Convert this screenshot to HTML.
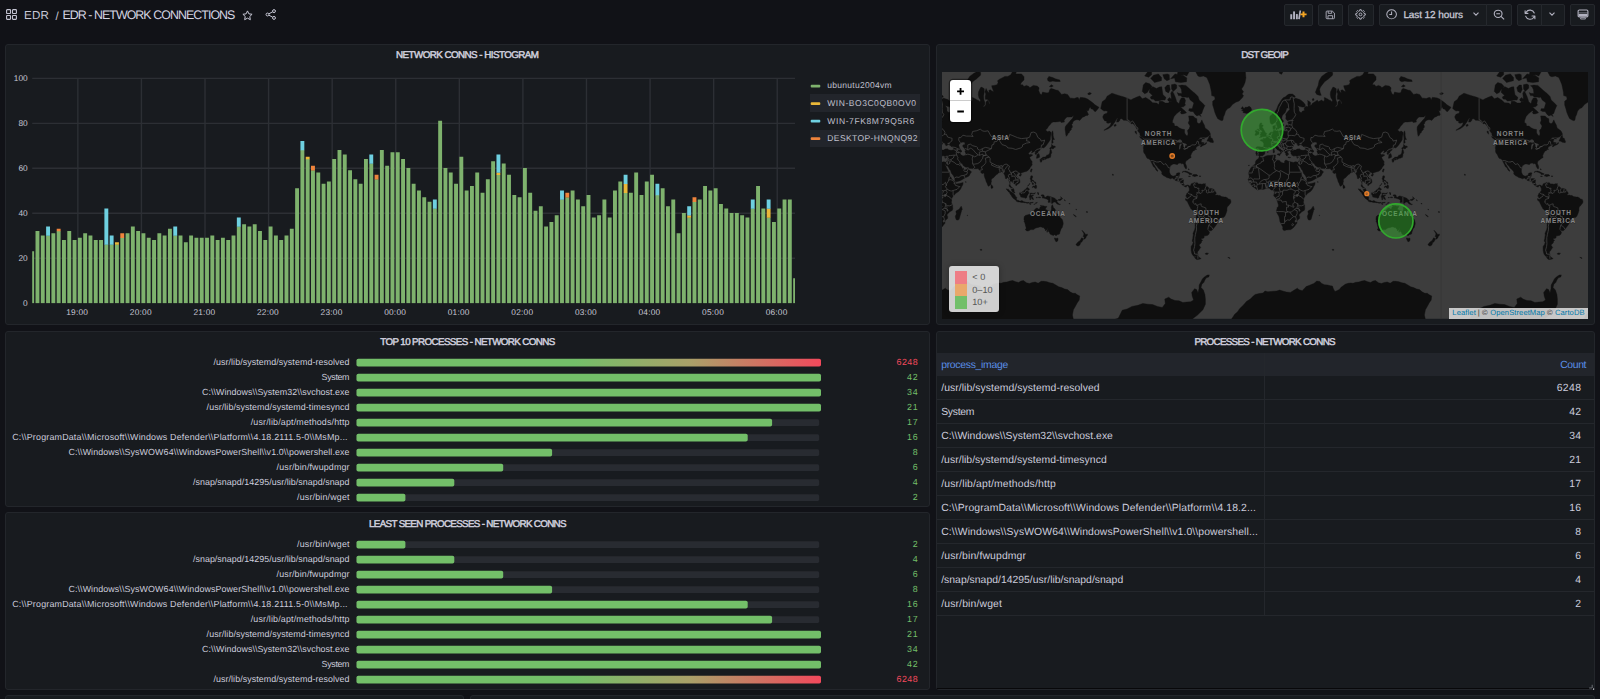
<!DOCTYPE html>
<html><head><meta charset="utf-8"><title>EDR - NETWORK CONNECTIONS - Grafana</title>
<style>
html,body{margin:0;padding:0;}
body{width:1600px;height:699px;overflow:hidden;background:#111217;position:relative;font-family:"Liberation Sans",sans-serif;}
.t{position:absolute;white-space:nowrap;line-height:20px;height:20px;text-rendering:geometricPrecision;}
.p{position:absolute;background:#181b1f;border:1px solid #23262b;border-radius:3px;box-sizing:border-box;}
.b{position:absolute;background:#181b1f;border:1px solid #25282d;box-sizing:border-box;top:4px;height:21.5px;border-radius:2px;}
svg{position:absolute;overflow:visible;}
.abs{position:absolute;}
</style></head><body>
<div class="p" style="left:5px;top:44px;width:925px;height:281px"></div>
<div class="p" style="left:936px;top:44px;width:659px;height:281px"></div>
<div class="p" style="left:5px;top:331px;width:925px;height:176px"></div>
<div class="p" style="left:5px;top:512px;width:925px;height:178px"></div>
<div class="p" style="left:936px;top:331px;width:659px;height:359px"></div>
<div class="p" style="left:5px;top:695px;width:459px;height:65px"></div>
<div class="p" style="left:470px;top:695px;width:1125px;height:65px"></div>
<svg style="left:6px;top:9px" width="11" height="11" viewBox="0 0 11 11" fill="none" stroke="#c4c4d2" stroke-width="1.1">
<rect x="0.6" y="0.6" width="3.9" height="3.9" rx="0.6"/><rect x="6.5" y="0.6" width="3.9" height="3.9" rx="0.6"/>
<rect x="0.6" y="6.5" width="3.9" height="3.9" rx="0.6"/><rect x="6.5" y="6.5" width="3.9" height="3.9" rx="0.6"/></svg>
<svg style="left:241.5px;top:9.8px" width="11" height="10.5" viewBox="0 0 22 21" fill="none" stroke="#c7c7d5" stroke-width="2" stroke-linejoin="round">
<path d="M11 1.8l2.8 5.9 6.4.8-4.7 4.5 1.2 6.4L11 16.3 5.3 19.4l1.2-6.4L1.8 8.5l6.4-.8z"/></svg>
<svg style="left:264.6px;top:9.3px" width="11.5" height="11" viewBox="0 0 23 22" fill="none" stroke="#c7c7d5" stroke-width="2">
<circle cx="18" cy="4.2" r="2.9"/><circle cx="5" cy="11" r="2.9"/><circle cx="18" cy="17.8" r="2.9"/><path d="M7.6 9.7l7.8-4.1M7.6 12.3l7.8 4.1"/></svg>
<div class="b" style="left:1284px;width:29px;"></div>
<div class="b" style="left:1318px;width:25px;"></div>
<div class="b" style="left:1348px;width:26px;"></div>
<div class="b" style="left:1379px;width:108px;border-radius:2px 0 0 2px"></div>
<div class="b" style="left:1486px;width:26px;border-radius:0 2px 2px 0"></div>
<div class="b" style="left:1517px;width:25px;border-radius:2px 0 0 2px"></div>
<div class="b" style="left:1541px;width:24px;border-radius:0 2px 2px 0"></div>
<div class="b" style="left:1570px;width:25px;"></div>
<svg style="left:1289.5px;top:8.6px" width="18" height="11.2" viewBox="0 0 18 12" preserveAspectRatio="none">
<rect x="0.3" y="5.6" width="1.9" height="5.4" fill="#b2b2c0"/><rect x="3.1" y="2.6" width="1.9" height="8.4" fill="#b2b2c0"/><rect x="5.9" y="5.4" width="1.9" height="5.6" fill="#b2b2c0"/>
<path d="M9.0 10.8L10.3 1.6" stroke="#b2b2c0" stroke-width="1.7"/>
<path d="M13.5 2.6v6.2M10.4 5.7h6.2" stroke="#f5a623" stroke-width="2"/></svg>
<svg style="left:1325.4px;top:9.7px" width="10.6" height="9.8" viewBox="0 0 23 23" preserveAspectRatio="none" fill="none" stroke="#b2b2c0" stroke-width="2" stroke-linejoin="round">
<path d="M2.5 4.5a2 2 0 0 1 2-2h11.2l4.8 4.8v11.2a2 2 0 0 1-2 2h-14a2 2 0 0 1-2-2z"/><path d="M7 2.8v5h7.5v-5M6.5 20.3v-7h10v7"/></svg>
<svg style="left:1355.3px;top:9.0px" width="11" height="10.8" viewBox="0 0 24 24" preserveAspectRatio="none" fill="none" stroke="#b2b2c0" stroke-width="2.1" stroke-linejoin="round">
<circle cx="12" cy="12" r="3.1"/><path d="M10.07 4.24L10.42 1.52L13.58 1.52L13.93 4.24L16.13 5.15L18.30 3.47L20.53 5.70L18.85 7.87L19.76 10.07L22.48 10.42L22.48 13.58L19.76 13.93L18.85 16.13L20.53 18.30L18.30 20.53L16.13 18.85L13.93 19.76L13.58 22.48L10.42 22.48L10.07 19.76L7.87 18.85L5.70 20.53L3.47 18.30L5.15 16.13L4.24 13.93L1.52 13.58L1.52 10.42L4.24 10.07L5.15 7.87L3.47 5.70L5.70 3.47L7.87 5.15Z"/></svg>
<svg style="left:1385.7px;top:9.1px" width="11.2" height="10.6" viewBox="0 0 22 22" preserveAspectRatio="none" fill="none" stroke="#b2b2c0" stroke-width="2">
<circle cx="11" cy="11" r="9.5"/><path d="M11 5v6.3H6.5"/></svg>
<svg style="left:1472.8px;top:12.3px" width="6" height="4" viewBox="0 0 12 8" fill="none" stroke="#b2b2c0" stroke-width="2.2"><path d="M1 1.2l5 5 5-5"/></svg>
<svg style="left:1549.3px;top:12.3px" width="6" height="4" viewBox="0 0 12 8" fill="none" stroke="#b2b2c0" stroke-width="2.2"><path d="M1 1.2l5 5 5-5"/></svg>
<svg style="left:1493px;top:9.0px" width="12" height="11.2" viewBox="0 0 24 24" preserveAspectRatio="none" fill="none" stroke="#b2b2c0" stroke-width="2.2">
<circle cx="10.3" cy="10.3" r="7.8"/><path d="M16 16l6.3 6.3M6.6 10.3h7.4"/></svg>
<svg style="left:1523.6px;top:8.9px" width="12" height="11.4" viewBox="0 0 24 24" preserveAspectRatio="none" fill="none" stroke="#b2b2c0" stroke-width="2.2" stroke-linecap="round" stroke-linejoin="round">
<path d="M20.5 8.5A9 9 0 0 0 4.2 6.8L2.5 9M2.2 3.5v5.7h5.7M3.5 15.5a9 9 0 0 0 16.3 1.7l1.7-2.2M21.8 20.5v-5.7h-5.7"/></svg>
<svg style="left:1576.6px;top:8.6px" width="12" height="11.4" viewBox="0 0 24 24" fill="none" preserveAspectRatio="none" stroke="#b2b2c0" stroke-width="2.2" stroke-linejoin="round">
<rect x="2.2" y="2.2" width="19.6" height="14.6" rx="2.4"/><path d="M2.8 8.2h18.4" stroke-width="1.2"/><rect x="3" y="10.4" width="18" height="5.6" fill="#b2b2c0" stroke="none"/><path d="M7.3 18.6h9.4v2.6H7.3z" stroke-width="1.6"/></svg>
<svg style="left:0;top:0" width="1600" height="699" viewBox="0 0 1600 699">
<defs><clipPath id="pc"><rect x="32.2" y="60" width="762.8" height="243.5"/></clipPath></defs>
<path d="M32.2 258.24H795.0 M32.2 213.28H795.0 M32.2 168.32H795.0 M32.2 123.36H795.0 M32.2 78.40H795.0 M77.85 78.4V303.2 M141.43 78.4V303.2 M205.01 78.4V303.2 M268.59 78.4V303.2 M332.17 78.4V303.2 M395.75 78.4V303.2 M459.33 78.4V303.2 M522.91 78.4V303.2 M586.49 78.4V303.2 M650.07 78.4V303.2 M713.65 78.4V303.2 M777.23 78.4V303.2" stroke="#2c2f34" stroke-width="1.4" fill="none"/>
<g clip-path="url(#pc)">
<path d="M30.22 303.20V251.20h3.9V303.20zM35.51 303.20V230.96h3.9V303.20zM40.81 303.20V235.46h3.9V303.20zM46.11 303.20V235.46h3.9V303.20zM51.41 303.20V233.21h3.9V303.20zM56.71 303.20V230.96h3.9V303.20zM62.01 303.20V239.96h3.9V303.20zM67.30 303.20V230.96h3.9V303.20zM72.60 303.20V239.96h3.9V303.20zM77.90 303.20V237.71h3.9V303.20zM83.20 303.20V233.21h3.9V303.20zM88.50 303.20V235.46h3.9V303.20zM93.80 303.20V239.96h3.9V303.20zM99.09 303.20V239.96h3.9V303.20zM104.39 303.20V244.45h3.9V303.20zM109.69 303.20V244.45h3.9V303.20zM114.99 303.20V244.45h3.9V303.20zM120.29 303.20V237.71h3.9V303.20zM125.59 303.20V233.21h3.9V303.20zM130.88 303.20V226.47h3.9V303.20zM136.18 303.20V230.96h3.9V303.20zM141.48 303.20V233.21h3.9V303.20zM146.78 303.20V237.71h3.9V303.20zM152.08 303.20V239.96h3.9V303.20zM157.38 303.20V233.21h3.9V303.20zM162.67 303.20V235.46h3.9V303.20zM167.97 303.20V228.72h3.9V303.20zM173.27 303.20V235.46h3.9V303.20zM178.57 303.20V235.46h3.9V303.20zM183.87 303.20V242.20h3.9V303.20zM189.16 303.20V235.46h3.9V303.20zM194.46 303.20V237.71h3.9V303.20zM199.76 303.20V237.71h3.9V303.20zM205.06 303.20V237.71h3.9V303.20zM210.36 303.20V235.46h3.9V303.20zM215.66 303.20V239.96h3.9V303.20zM220.95 303.20V237.71h3.9V303.20zM226.25 303.20V239.96h3.9V303.20zM231.55 303.20V235.46h3.9V303.20zM236.85 303.20V226.47h3.9V303.20zM242.15 303.20V224.22h3.9V303.20zM247.45 303.20V226.47h3.9V303.20zM252.75 303.20V224.22h3.9V303.20zM258.04 303.20V230.96h3.9V303.20zM263.34 303.20V239.96h3.9V303.20zM268.64 303.20V226.47h3.9V303.20zM273.94 303.20V235.46h3.9V303.20zM279.24 303.20V239.96h3.9V303.20zM284.53 303.20V235.46h3.9V303.20zM289.83 303.20V228.72h3.9V303.20zM295.13 303.20V188.25h3.9V303.20zM300.43 303.20V150.04h3.9V303.20zM305.73 303.20V159.03h3.9V303.20zM311.03 303.20V170.27h3.9V303.20zM316.32 303.20V172.52h3.9V303.20zM321.62 303.20V183.76h3.9V303.20zM326.92 303.20V181.51h3.9V303.20zM332.22 303.20V159.03h3.9V303.20zM337.52 303.20V150.04h3.9V303.20zM342.82 303.20V154.53h3.9V303.20zM348.12 303.20V170.27h3.9V303.20zM353.41 303.20V179.26h3.9V303.20zM358.71 303.20V183.76h3.9V303.20zM364.01 303.20V159.03h3.9V303.20zM369.31 303.20V163.52h3.9V303.20zM374.61 303.20V179.26h3.9V303.20zM379.90 303.20V150.04h3.9V303.20zM385.20 303.20V165.77h3.9V303.20zM390.50 303.20V152.28h3.9V303.20zM395.80 303.20V152.28h3.9V303.20zM401.10 303.20V159.03h3.9V303.20zM406.40 303.20V168.02h3.9V303.20zM411.69 303.20V183.76h3.9V303.20zM416.99 303.20V190.50h3.9V303.20zM422.29 303.20V197.24h3.9V303.20zM427.59 303.20V201.74h3.9V303.20zM432.89 303.20V208.48h3.9V303.20zM438.19 303.20V120.81h3.9V303.20zM443.49 303.20V168.02h3.9V303.20zM448.78 303.20V172.52h3.9V303.20zM454.08 303.20V183.76h3.9V303.20zM459.38 303.20V156.78h3.9V303.20zM464.68 303.20V190.50h3.9V303.20zM469.98 303.20V186.00h3.9V303.20zM475.27 303.20V172.52h3.9V303.20zM480.57 303.20V192.75h3.9V303.20zM485.87 303.20V179.26h3.9V303.20zM491.17 303.20V161.28h3.9V303.20zM496.47 303.20V174.76h3.9V303.20zM501.77 303.20V163.52h3.9V303.20zM507.06 303.20V174.76h3.9V303.20zM512.36 303.20V195.00h3.9V303.20zM517.66 303.20V197.24h3.9V303.20zM522.96 303.20V168.02h3.9V303.20zM528.26 303.20V192.75h3.9V303.20zM533.56 303.20V210.73h3.9V303.20zM538.86 303.20V206.24h3.9V303.20zM544.15 303.20V226.47h3.9V303.20zM549.45 303.20V221.97h3.9V303.20zM554.75 303.20V215.23h3.9V303.20zM560.05 303.20V199.49h3.9V303.20zM565.35 303.20V197.24h3.9V303.20zM570.64 303.20V190.50h3.9V303.20zM575.94 303.20V199.49h3.9V303.20zM581.24 303.20V206.24h3.9V303.20zM586.54 303.20V195.00h3.9V303.20zM591.84 303.20V217.48h3.9V303.20zM597.14 303.20V215.23h3.9V303.20zM602.43 303.20V199.49h3.9V303.20zM607.73 303.20V217.48h3.9V303.20zM613.03 303.20V190.50h3.9V303.20zM618.33 303.20V181.51h3.9V303.20zM623.63 303.20V192.75h3.9V303.20zM628.93 303.20V192.75h3.9V303.20zM634.22 303.20V172.52h3.9V303.20zM639.52 303.20V195.00h3.9V303.20zM644.82 303.20V181.51h3.9V303.20zM650.12 303.20V174.76h3.9V303.20zM655.42 303.20V195.00h3.9V303.20zM660.72 303.20V188.25h3.9V303.20zM666.01 303.20V206.24h3.9V303.20zM671.31 303.20V199.49h3.9V303.20zM676.61 303.20V233.21h3.9V303.20zM681.91 303.20V212.98h3.9V303.20zM687.21 303.20V217.48h3.9V303.20zM692.51 303.20V201.74h3.9V303.20zM697.80 303.20V199.49h3.9V303.20zM703.10 303.20V186.00h3.9V303.20zM708.40 303.20V190.50h3.9V303.20zM713.70 303.20V188.25h3.9V303.20zM719.00 303.20V203.99h3.9V303.20zM724.30 303.20V208.48h3.9V303.20zM729.59 303.20V212.98h3.9V303.20zM734.89 303.20V212.98h3.9V303.20zM740.19 303.20V215.23h3.9V303.20zM745.49 303.20V217.48h3.9V303.20zM750.79 303.20V208.48h3.9V303.20zM756.09 303.20V186.00h3.9V303.20zM761.38 303.20V208.48h3.9V303.20zM766.68 303.20V217.48h3.9V303.20zM771.98 303.20V221.97h3.9V303.20zM777.28 303.20V208.48h3.9V303.20zM782.58 303.20V199.49h3.9V303.20zM787.88 303.20V199.49h3.9V303.20zM793.17 303.20V278.17h3.9V303.20z" fill="#7eb26d" fill-opacity="1"/>
<path d="M114.99 244.75V242.20h3.9V244.75zM305.73 159.33V156.78h3.9V159.33zM496.47 175.06V172.52h3.9V175.06zM623.63 193.05V183.76h3.9V193.05zM687.21 217.78V215.23h3.9V217.78zM766.68 217.78V208.48h3.9V217.78z" fill="#eab839" fill-opacity="1"/>
<path d="M46.11 235.76V226.47h3.9V235.76zM104.39 244.75V208.48h3.9V244.75zM109.69 244.75V235.46h3.9V244.75zM173.27 235.76V226.47h3.9V235.76zM236.85 226.77V217.48h3.9V226.77zM300.43 150.34V141.04h3.9V150.34zM369.31 163.82V154.53h3.9V163.82zM432.89 208.78V199.49h3.9V208.78zM496.47 172.82V154.53h3.9V172.82zM560.05 199.79V190.50h3.9V199.79zM623.63 184.06V174.76h3.9V184.06zM655.42 195.30V183.76h3.9V195.30zM687.21 215.53V206.24h3.9V215.53zM750.79 208.78V199.49h3.9V208.78zM766.68 208.78V199.49h3.9V208.78z" fill="#6ed0e0" fill-opacity="1"/>
<path d="M56.71 231.26V228.72h3.9V231.26zM120.29 238.01V233.21h3.9V238.01zM311.03 170.57V165.77h3.9V170.57zM374.61 179.56V174.76h3.9V179.56zM565.35 197.54V192.75h3.9V197.54zM692.51 202.04V197.24h3.9V202.04z" fill="#ef843c" fill-opacity="1"/>
</g></svg>
<svg style="left:0;top:0" width="1600" height="699"><rect x="810.7" y="84.70" width="9.6" height="2.7" rx="1" fill="#7eb26d"/></svg>
<div class="abs" style="left:810px;top:94.3px;width:110.3px;height:17.5px;background:#22252b"></div>
<svg style="left:0;top:0" width="1600" height="699"><rect x="810.7" y="102.25" width="9.6" height="2.7" rx="1" fill="#eab839"/></svg>
<svg style="left:0;top:0" width="1600" height="699"><rect x="810.7" y="119.80" width="9.6" height="2.7" rx="1" fill="#6ed0e0"/></svg>
<div class="abs" style="left:810px;top:129.5px;width:110.3px;height:17.5px;background:#22252b"></div>
<svg style="left:0;top:0" width="1600" height="699"><rect x="810.7" y="137.35" width="9.6" height="2.7" rx="1" fill="#ef843c"/></svg>
<svg style="left:0;top:0" width="1600" height="699" viewBox="0 0 1600 699"><defs><linearGradient id="gg" x1="0" x2="1" y1="0" y2="0"><stop offset="0" stop-color="#73bf69"/><stop offset="0.47" stop-color="#73bf69"/><stop offset="0.72" stop-color="#aaa069"/><stop offset="1" stop-color="#f2495c"/></linearGradient></defs><rect x="356.5" y="359.30" width="462.7" height="6.6" rx="1.6" fill="#282b31"/><rect x="356.5" y="358.70" width="464.5" height="7.8" rx="1.8" fill="url(#gg)"/><rect x="356.5" y="374.30" width="462.7" height="6.6" rx="1.6" fill="#282b31"/><rect x="356.5" y="373.70" width="464.5" height="7.8" rx="1.8" fill="#73bf69"/><rect x="356.5" y="389.30" width="462.7" height="6.6" rx="1.6" fill="#282b31"/><rect x="356.5" y="388.70" width="464.5" height="7.8" rx="1.8" fill="#73bf69"/><rect x="356.5" y="404.30" width="462.7" height="6.6" rx="1.6" fill="#282b31"/><rect x="356.5" y="403.70" width="464.5" height="7.8" rx="1.8" fill="#73bf69"/><rect x="356.5" y="419.30" width="462.7" height="6.6" rx="1.6" fill="#282b31"/><rect x="356.5" y="418.70" width="415.6" height="7.8" rx="1.8" fill="#73bf69"/><rect x="356.5" y="434.30" width="462.7" height="6.6" rx="1.6" fill="#282b31"/><rect x="356.5" y="433.70" width="391.2" height="7.8" rx="1.8" fill="#73bf69"/><rect x="356.5" y="449.30" width="462.7" height="6.6" rx="1.6" fill="#282b31"/><rect x="356.5" y="448.70" width="195.6" height="7.8" rx="1.8" fill="#73bf69"/><rect x="356.5" y="464.30" width="462.7" height="6.6" rx="1.6" fill="#282b31"/><rect x="356.5" y="463.70" width="146.7" height="7.8" rx="1.8" fill="#73bf69"/><rect x="356.5" y="479.30" width="462.7" height="6.6" rx="1.6" fill="#282b31"/><rect x="356.5" y="478.70" width="97.8" height="7.8" rx="1.8" fill="#73bf69"/><rect x="356.5" y="494.30" width="462.7" height="6.6" rx="1.6" fill="#282b31"/><rect x="356.5" y="493.70" width="48.9" height="7.8" rx="1.8" fill="#73bf69"/><rect x="356.5" y="541.30" width="462.7" height="6.6" rx="1.6" fill="#282b31"/><rect x="356.5" y="540.70" width="48.9" height="7.8" rx="1.8" fill="#73bf69"/><rect x="356.5" y="556.30" width="462.7" height="6.6" rx="1.6" fill="#282b31"/><rect x="356.5" y="555.70" width="97.8" height="7.8" rx="1.8" fill="#73bf69"/><rect x="356.5" y="571.30" width="462.7" height="6.6" rx="1.6" fill="#282b31"/><rect x="356.5" y="570.70" width="146.7" height="7.8" rx="1.8" fill="#73bf69"/><rect x="356.5" y="586.30" width="462.7" height="6.6" rx="1.6" fill="#282b31"/><rect x="356.5" y="585.70" width="195.6" height="7.8" rx="1.8" fill="#73bf69"/><rect x="356.5" y="601.30" width="462.7" height="6.6" rx="1.6" fill="#282b31"/><rect x="356.5" y="600.70" width="391.2" height="7.8" rx="1.8" fill="#73bf69"/><rect x="356.5" y="616.30" width="462.7" height="6.6" rx="1.6" fill="#282b31"/><rect x="356.5" y="615.70" width="415.6" height="7.8" rx="1.8" fill="#73bf69"/><rect x="356.5" y="631.30" width="462.7" height="6.6" rx="1.6" fill="#282b31"/><rect x="356.5" y="630.70" width="464.5" height="7.8" rx="1.8" fill="#73bf69"/><rect x="356.5" y="646.30" width="462.7" height="6.6" rx="1.6" fill="#282b31"/><rect x="356.5" y="645.70" width="464.5" height="7.8" rx="1.8" fill="#73bf69"/><rect x="356.5" y="661.30" width="462.7" height="6.6" rx="1.6" fill="#282b31"/><rect x="356.5" y="660.70" width="464.5" height="7.8" rx="1.8" fill="#73bf69"/><rect x="356.5" y="676.30" width="462.7" height="6.6" rx="1.6" fill="#282b31"/><rect x="356.5" y="675.70" width="464.5" height="7.8" rx="1.8" fill="url(#gg)"/></svg>
<div class="abs" style="left:937px;top:353px;width:656.5px;height:23.2px;background:#22252b"></div>
<div class="abs" style="left:1264.3px;top:353px;width:1px;height:262.5px;background:#24272c"></div>
<div class="abs" style="left:937px;top:398.7px;width:656.5px;height:1px;background:#24272c"></div>
<div class="abs" style="left:937px;top:422.8px;width:656.5px;height:1px;background:#24272c"></div>
<div class="abs" style="left:937px;top:446.8px;width:656.5px;height:1px;background:#24272c"></div>
<div class="abs" style="left:937px;top:470.9px;width:656.5px;height:1px;background:#24272c"></div>
<div class="abs" style="left:937px;top:494.9px;width:656.5px;height:1px;background:#24272c"></div>
<div class="abs" style="left:937px;top:519.0px;width:656.5px;height:1px;background:#24272c"></div>
<div class="abs" style="left:937px;top:543.1px;width:656.5px;height:1px;background:#24272c"></div>
<div class="abs" style="left:937px;top:567.1px;width:656.5px;height:1px;background:#24272c"></div>
<div class="abs" style="left:937px;top:591.2px;width:656.5px;height:1px;background:#24272c"></div>
<div class="abs" style="left:937px;top:615.2px;width:656.5px;height:1px;background:#24272c"></div>
<div class="abs" style="left:937px;top:687.6px;width:656px;height:1.2px;background:#08080a"></div>
<svg style="left:1588px;top:683.5px" width="7" height="7" viewBox="0 0 7 7"><path d="M4.2 0.8v3.2H1.2" stroke="#6a6d75" stroke-width="1" fill="none"/><rect x="5" y="4.5" width="1.2" height="1.2" fill="#e0e0e8"/></svg>
<svg style="left:941.6px;top:72.0px;overflow:hidden" width="646.6" height="246.8" viewBox="0 0 646.6 246.8">
<rect x="0" y="0" width="646.6" height="246.8" fill="#3d3d3d"/>
<path d="M-34.8 84.8L-34.2 84.6L-33.2 85.5L-31.9 85.4L-31.0 85.6L-29.5 84.8L-28.0 83.9L-26.1 83.4L-24.1 83.6L-22.2 83.2L-20.2 83.1L-19.0 82.9L-18.2 83.3L-18.7 84.3L-18.5 85.1L-19.1 86.6L-18.7 87.3L-18.0 87.9L-16.8 88.2L-15.8 88.2L-14.1 88.8L-13.8 89.7L-12.4 90.4L-10.9 91.1L-9.7 91.0L-9.3 90.2L-9.4 89.0L-8.5 88.3L-7.0 88.3L-6.3 89.0L-4.6 89.6L-2.6 90.0L-0.6 90.5L0.6 90.0L1.5 89.8L2.6 90.0L2.9 91.5L2.7 92.1L3.3 93.5L4.0 94.6L4.7 96.3L5.7 98.1L5.9 99.2L7.1 100.2L7.4 101.3L7.5 102.9L7.7 103.8L8.6 104.4L9.3 106.1L9.8 107.3L11.1 108.3L12.4 109.3L13.2 110.0L13.3 111.0L14.3 112.0L15.8 111.7L17.4 111.4L19.2 111.1L21.1 110.6L21.0 112.0L20.5 113.3L19.7 114.6L18.9 116.4L17.9 117.9L16.5 119.6L15.0 120.5L13.5 121.6L12.1 123.2L11.1 124.3L10.4 124.9L9.8 126.5L9.1 128.0L9.5 129.1L9.4 130.4L9.9 131.9L10.6 132.8L10.6 134.6L10.8 136.6L10.4 138.2L9.1 139.1L7.7 139.8L6.7 140.9L5.2 142.2L5.0 143.3L5.6 144.4L5.7 146.2L4.7 147.3L3.3 148.1L3.1 149.7L2.8 151.4L1.8 152.5L0.8 154.0L-0.4 155.4L-1.6 156.5L-3.1 157.5L-4.0 157.7L-5.5 157.8L-7.5 157.9L-9.4 158.6L-10.6 158.2L-11.0 157.6L-11.4 156.3L-11.1 155.1L-12.1 153.4L-12.9 151.6L-14.0 149.7L-14.4 147.6L-14.8 145.4L-15.1 144.4L-16.0 142.8L-17.3 140.4L-17.5 138.7L-17.1 137.1L-16.8 135.6L-15.7 134.4L-15.5 133.1L-16.0 131.4L-16.5 129.7L-17.0 128.3L-17.2 127.2L-18.0 126.1L-19.2 124.9L-20.0 124.1L-20.4 123.1L-19.7 122.3L-19.7 121.3L-19.4 120.1L-19.4 119.1L-19.7 118.5L-20.5 117.8L-21.7 118.0L-22.9 118.1L-23.7 117.2L-24.6 116.2L-26.1 116.0L-27.5 116.2L-28.5 116.6L-29.5 117.1L-31.0 117.6L-32.1 117.3L-33.4 117.2L-34.9 117.5L-36.3 118.0L-37.3 117.5L-38.3 116.7L-39.6 115.8L-40.2 115.5L-41.2 114.9L-41.9 113.8L-42.4 112.9L-43.4 111.9L-43.9 111.3L-44.8 110.5L-45.4 109.9L-45.2 109.0L-45.9 107.8L-45.3 106.7L-44.9 105.4L-44.6 104.1L-45.0 102.9L-45.3 101.6L-45.6 101.1L-44.9 99.7L-44.6 98.4L-43.7 97.3L-43.2 96.0L-42.2 94.9L-41.6 93.9L-40.0 93.0L-39.0 92.3L-38.5 91.2L-38.6 89.9L-38.0 88.7L-37.1 87.6L-35.8 86.9L-35.2 85.7L-34.8 84.8ZM19.2 134.2L19.8 135.6L20.3 137.4L19.6 138.2L19.3 139.7L18.7 141.7L18.1 143.8L17.5 146.0L17.0 147.6L15.5 148.1L14.2 147.7L13.7 146.3L13.3 144.6L13.8 143.1L14.4 142.1L14.1 140.5L13.9 139.5L14.7 138.4L16.2 137.8L17.4 136.9L18.1 135.7L19.2 134.2ZM-37.8 83.3L-37.6 82.1L-38.3 81.2L-37.7 79.6L-37.5 78.0L-37.7 76.7L-38.1 75.6L-36.8 74.7L-34.9 74.8L-32.9 75.1L-30.8 75.1L-30.2 73.3L-30.2 71.5L-31.2 70.1L-31.9 69.2L-33.4 68.8L-33.7 68.1L-31.9 67.5L-30.6 67.8L-30.8 66.1L-30.2 66.6L-28.8 66.4L-27.5 65.4L-27.4 64.3L-26.6 64.0L-25.6 63.4L-24.9 62.3L-24.3 61.0L-23.6 60.5L-22.2 60.1L-21.0 60.0L-20.4 59.3L-20.6 57.6L-21.0 56.3L-21.1 54.1L-19.6 53.8L-18.6 52.9L-18.8 54.9L-18.3 55.4L-19.0 56.3L-19.5 57.3L-19.2 58.3L-18.2 58.8L-18.3 59.3L-17.3 59.0L-16.3 58.7L-15.1 59.5L-14.8 59.0L-13.1 58.5L-11.4 58.0L-10.7 58.7L-9.8 58.7L-9.0 57.8L-8.5 57.1L-8.5 54.5L-7.9 53.2L-6.9 52.9L-6.3 54.1L-5.3 54.0L-5.1 51.8L-6.0 51.2L-6.1 50.1L-4.8 49.5L-3.6 49.3L-1.6 49.5L-0.6 48.7L0.5 48.7L-0.6 47.7L-2.1 47.5L-4.6 48.1L-6.5 48.7L-7.5 47.7L-8.2 46.7L-8.0 44.5L-8.3 42.2L-7.0 40.6L-5.5 38.8L-4.3 37.4L-4.3 36.5L-5.3 36.0L-7.2 36.0L-8.0 38.6L-8.8 40.6L-10.4 41.9L-11.6 43.4L-12.1 45.1L-12.2 47.1L-10.9 48.3L-10.5 49.3L-11.6 50.8L-12.7 51.9L-12.7 53.8L-13.2 55.4L-13.8 55.7L-14.8 55.9L-15.1 56.8L-16.3 57.0L-16.5 55.6L-16.8 54.5L-17.4 53.1L-18.0 50.8L-18.4 49.9L-18.7 49.5L-19.0 50.4L-19.9 51.0L-21.0 52.1L-22.2 52.3L-23.5 51.2L-23.9 49.5L-24.1 47.5L-24.2 45.9L-24.0 44.3L-22.6 43.0L-21.0 41.5L-19.4 41.1L-18.7 39.3L-17.5 37.4L-16.5 35.1L-15.8 33.1L-14.5 31.1L-13.4 29.2L-11.9 27.0L-10.4 25.6L-8.5 24.8L-7.0 23.3L-5.0 22.1L-3.6 22.1L-1.6 22.1L-0.2 23.0L1.3 24.2L0.3 25.9L1.8 26.2L3.3 26.8L5.2 27.3L7.2 28.4L9.6 30.5L11.1 32.6L11.3 34.3L10.1 35.1L8.2 35.1L6.2 34.6L4.7 34.1L3.3 33.6L2.8 32.8L3.8 34.6L4.9 36.0L5.0 39.1L6.2 40.2L7.7 40.4L8.2 39.3L9.6 38.8L10.6 38.8L10.1 36.7L10.6 35.5L12.1 34.3L13.5 34.8L14.2 34.1L13.8 32.3L14.0 29.2L13.3 28.7L15.0 29.2L16.5 30.5L16.5 32.6L15.0 33.1L16.0 33.6L17.6 33.1L18.4 31.3L19.9 30.5L21.8 29.2L23.3 28.1L24.3 29.8L25.8 29.0L27.7 28.1L29.2 29.5L30.6 28.1L30.2 25.6L31.6 25.9L33.6 27.0L35.0 27.9L36.5 28.4L38.0 30.0L38.5 27.9L37.0 25.9L36.3 22.7L36.5 20.0L38.0 16.8L39.0 15.1L40.9 15.8L42.2 16.8L42.2 20.6L41.6 24.2L41.9 27.9L42.9 30.5L42.7 33.1L41.2 34.3L41.9 35.1L43.8 33.1L44.1 29.8L45.8 28.4L46.8 30.0L47.0 31.8L48.0 31.6L47.3 29.5L45.3 27.3L43.4 27.3L43.2 24.5L43.8 22.1L42.9 19.7L44.1 16.5L45.3 19.1L47.3 21.2L46.8 18.4L48.2 17.8L50.0 19.1L51.7 19.7L50.2 15.8L49.7 13.8L52.2 13.4L55.1 12.7L56.1 10.6L55.6 8.7L57.5 7.2L60.0 6.0L62.9 4.4L65.8 4.4L68.8 2.7L70.7 -0.7L73.0 -2.5L74.6 -1.2L73.7 1.9L76.6 1.9L79.5 1.9L82.0 4.8L82.0 7.9L79.0 10.9L78.6 13.1L80.5 12.7L82.0 14.5L84.4 13.4L86.9 14.5L87.8 15.8L91.3 13.4L93.2 13.8L95.2 14.1L97.1 15.8L96.6 18.4L98.1 22.1L99.6 22.7L100.6 20.0L102.5 20.6L105.0 20.9L106.9 20.6L107.7 17.8L108.9 16.5L111.3 17.1L113.8 18.1L116.2 18.4L117.7 20.3L119.6 22.4L122.6 21.8L125.5 22.4L127.4 25.1L127.9 26.2L129.9 26.2L132.3 26.5L134.8 25.6L136.2 25.6L137.2 27.9L138.2 25.4L140.2 25.6L143.1 25.9L145.5 27.0L147.0 28.1L149.4 29.8L151.4 31.3L152.9 32.8L155.3 34.3L157.0 35.3L156.0 36.7L154.5 38.6L153.8 39.5L152.4 39.3L150.9 37.2L149.0 36.7L148.5 35.1L147.3 36.3L146.5 38.4L145.5 38.8L144.6 38.6L145.5 40.6L146.5 42.4L145.5 43.6L144.1 43.4L142.1 44.7L140.6 45.3L139.4 46.5L137.7 48.5L136.2 47.7L134.3 47.7L132.8 48.3L131.8 48.9L130.9 49.9L130.6 51.4L129.6 52.7L130.4 54.1L130.2 55.6L129.2 55.9L129.4 57.6L128.4 58.5L127.4 59.7L127.2 60.8L126.0 61.3L125.5 62.9L124.2 64.3L123.8 62.6L123.5 60.1L123.1 57.6L123.2 55.0L124.3 53.2L125.5 51.9L127.2 50.1L128.9 48.1L130.4 46.5L131.2 44.9L131.4 43.2L129.9 44.9L127.9 44.9L127.0 45.1L125.5 44.9L124.3 45.5L122.6 47.5L121.9 48.9L122.6 49.9L120.6 50.3L119.1 50.4L118.2 49.3L116.2 49.7L113.8 49.9L111.3 49.9L109.8 50.4L108.4 52.3L106.4 54.5L105.4 56.3L103.5 58.0L105.0 59.3L105.7 59.8L107.4 59.0L108.4 60.1L109.2 60.6L108.9 62.6L108.4 64.9L108.2 67.9L106.9 69.8L105.9 71.2L104.5 73.2L103.0 75.0L101.5 75.9L100.1 75.4L99.1 76.2L98.3 76.7L97.8 78.3L96.2 79.6L95.7 80.3L96.4 81.2L97.3 82.7L97.6 84.5L97.3 85.4L96.2 85.8L94.7 86.4L94.5 85.4L94.8 84.3L94.9 83.3L94.2 82.4L93.4 82.3L93.0 81.7L93.5 80.3L92.6 79.7L91.3 80.1L90.1 80.8L89.5 81.1L90.3 79.0L89.3 78.4L88.1 79.7L86.9 80.7L86.2 81.3L87.2 82.2L87.6 83.1L88.8 82.3L89.8 82.7L90.8 83.1L89.8 83.7L88.8 84.4L87.6 85.6L88.1 86.6L88.9 87.9L90.0 89.4L90.2 90.5L89.1 91.0L90.1 91.6L90.1 93.0L89.3 94.0L88.3 95.2L87.8 96.4L86.9 97.5L85.9 98.4L84.7 99.3L83.0 99.7L82.0 100.0L80.5 100.6L79.0 101.0L78.8 101.9L78.4 101.8L78.4 100.9L77.1 100.6L76.1 101.1L75.2 102.0L74.4 103.1L74.6 104.1L75.6 105.4L76.9 106.4L77.6 107.7L77.9 109.5L77.8 110.8L76.6 111.7L75.6 112.1L75.1 112.9L74.0 113.7L73.5 113.0L73.7 112.3L72.7 112.0L71.7 111.3L71.2 110.5L69.8 109.8L69.6 109.1L69.0 109.1L68.8 110.0L68.4 111.2L68.0 112.5L68.1 113.3L68.8 114.0L69.2 115.1L70.2 115.6L71.0 116.2L71.7 116.9L72.1 118.1L72.1 119.4L72.7 120.3L72.9 120.9L72.2 121.0L71.2 120.2L70.1 119.6L69.6 118.6L69.3 117.4L69.1 116.2L68.5 115.6L67.8 114.6L67.1 114.4L67.2 113.0L67.5 111.7L67.5 110.5L67.0 109.0L66.6 107.5L66.4 106.0L65.6 105.5L64.4 106.7L63.4 106.5L63.3 104.9L62.9 103.6L62.4 102.5L61.4 101.6L61.0 100.5L60.5 99.7L59.5 99.6L58.8 100.3L57.5 100.6L56.1 100.9L55.9 101.8L54.6 102.5L53.6 103.5L52.4 104.7L51.5 105.8L50.2 106.5L49.4 107.2L49.3 108.5L49.5 109.5L49.1 110.5L49.0 112.0L48.4 113.0L47.6 113.5L47.0 114.3L46.3 114.1L45.6 113.0L45.1 111.3L44.3 110.0L43.9 108.7L43.6 107.5L42.9 105.9L42.4 104.4L42.2 103.2L42.2 101.8L42.0 100.8L40.9 101.4L39.9 101.5L38.7 100.2L39.4 99.4L38.3 99.0L37.5 98.3L36.8 97.4L36.1 96.6L34.6 96.7L33.1 96.7L31.3 96.8L29.7 96.6L28.5 96.4L27.1 96.2L26.5 94.9L25.3 95.1L24.3 95.3L23.1 94.9L22.3 94.2L21.4 93.8L20.7 92.6L20.1 91.4L18.9 91.1L18.1 91.5L17.8 92.3L18.4 93.2L19.2 94.4L20.0 95.2L20.1 96.3L20.7 97.3L20.8 96.3L21.5 96.0L21.5 97.3L21.6 98.0L22.8 97.9L24.1 97.8L25.1 96.8L26.0 95.7L26.2 97.0L26.5 97.8L27.7 98.3L28.7 99.2L29.5 99.8L28.7 101.0L28.0 101.9L27.4 103.4L26.2 104.4L25.0 105.0L23.3 105.7L22.0 106.4L20.4 107.5L18.9 108.3L17.4 108.9L15.5 109.5L14.5 109.8L13.5 109.8L13.0 108.7L12.8 107.5L12.8 106.1L11.9 104.6L10.9 102.9L9.6 101.5L9.1 100.2L8.6 98.6L7.6 97.6L7.0 96.2L6.0 94.6L5.1 93.5L5.2 92.2L4.9 93.2L4.5 94.0L3.8 93.2L3.3 92.4L2.9 91.5L2.6 90.0L3.8 90.3L4.5 89.9L5.0 88.9L5.3 87.9L5.8 86.9L6.2 85.7L6.1 84.6L6.4 83.7L5.7 83.8L4.8 83.6L3.8 84.3L2.3 84.2L1.0 83.6L0.0 84.2L-1.1 83.6L-2.1 83.3L-2.4 82.3L-3.1 81.5L-2.8 80.6L-3.4 80.1L-3.3 79.4L-2.3 79.0L-0.8 79.0L-0.2 78.5L-0.5 78.1L0.5 78.0L1.8 78.0L3.1 77.1L4.2 77.0L5.3 76.8L6.2 77.6L7.2 78.0L8.6 78.3L10.1 78.3L11.6 77.6L11.7 76.6L10.9 75.5L9.6 74.7L8.6 73.7L7.6 73.2L7.2 72.5L8.0 71.5L8.4 70.5L9.3 69.8L8.2 69.8L7.0 70.4L5.7 70.8L5.2 71.4L5.7 72.4L6.7 72.5L5.7 72.9L4.7 73.5L3.9 73.7L3.7 72.6L2.8 72.2L3.8 71.5L2.8 71.4L2.1 70.7L1.1 70.8L0.3 71.8L0.0 72.6L-0.8 73.6L-1.0 75.0L-1.7 75.6L-2.0 76.4L-1.6 77.1L-0.7 77.9L-1.4 78.3L-2.1 78.4L-2.8 78.8L-3.4 79.3L-3.4 78.5L-4.4 78.4L-5.2 78.5L-5.7 79.2L-6.1 79.6L-6.6 78.9L-6.9 79.6L-6.5 80.4L-6.3 81.1L-5.5 81.8L-5.4 82.4L-6.3 82.2L-6.3 82.9L-6.7 83.8L-7.2 83.8L-7.8 83.4L-8.3 82.4L-8.0 81.8L-8.5 81.3L-9.0 80.4L-9.6 79.6L-10.0 78.9L-9.9 77.6L-10.2 77.0L-10.9 76.3L-11.9 75.6L-13.1 75.0L-14.0 74.0L-14.5 72.9L-15.1 72.6L-15.6 73.1L-15.6 71.9L-16.3 71.9L-17.0 72.5L-16.9 73.6L-16.5 74.4L-15.6 75.0L-15.1 76.3L-14.3 77.0L-13.3 77.1L-13.5 77.6L-12.4 78.3L-11.4 78.8L-10.9 79.4L-11.4 79.7L-12.2 79.0L-12.8 79.6L-12.8 80.1L-12.3 80.8L-12.8 81.3L-13.3 82.1L-13.6 82.1L-13.4 81.1L-13.3 80.2L-13.6 79.6L-14.3 79.2L-14.8 78.7L-15.4 78.3L-16.3 77.9L-17.1 77.2L-17.8 76.4L-18.7 75.6L-18.9 74.7L-19.4 74.2L-20.4 73.7L-21.1 74.4L-21.9 74.7L-22.5 75.4L-23.6 75.4L-24.6 75.1L-25.3 75.0L-26.0 75.6L-25.9 76.6L-25.9 77.2L-26.8 77.9L-28.0 78.3L-28.4 78.8L-29.0 79.8L-29.3 80.4L-28.8 81.1L-29.5 81.7L-29.8 82.6L-30.7 82.9L-31.2 83.7L-32.4 83.7L-33.3 83.7L-34.2 84.4L-34.9 84.3L-35.3 83.6L-35.8 83.1L-36.8 83.3L-37.8 83.3ZM2.6 85.7L3.3 85.4L4.7 84.9L4.1 85.7L3.3 86.2ZM21.4 20.3L22.8 22.4L25.3 23.3L27.2 23.3L26.2 20.6L25.6 17.5L26.5 15.1L28.5 12.4L30.8 9.5L34.1 7.2L38.5 3.2L38.7 0.6L35.5 -0.7L31.6 1.5L27.7 4.4L25.1 8.7L24.1 13.8L22.8 16.5L21.4 20.3ZM18.2 27.0L19.7 26.5L20.1 28.1L18.7 28.7ZM105.4 6.8L106.9 4.4L110.8 5.6L113.3 6.8L117.7 7.9L118.2 9.5L113.8 9.5L110.8 9.1L107.9 9.8L105.9 8.7ZM107.4 14.5L109.4 12.7L111.3 14.1L109.4 15.1ZM145.8 21.5L147.5 20.6L149.4 21.2L148.0 22.7L146.0 22.4ZM109.8 71.5L111.3 70.4L110.8 69.4L110.8 67.5L112.5 67.5L111.6 65.7L111.1 63.4L111.1 61.0L110.6 58.8L110.0 60.1L109.6 62.6L109.8 64.9L110.0 67.2L109.8 69.4L109.8 71.5ZM108.2 77.6L108.9 77.2L109.1 76.3L111.1 77.0L112.3 75.6L113.4 75.2L113.0 74.0L111.8 74.2L110.8 73.6L109.6 72.4L109.6 73.9L109.2 75.2L108.3 75.4L107.7 76.3L108.2 77.6ZM99.0 86.9L99.6 86.2L100.8 85.2L102.0 85.1L103.3 84.9L104.0 84.5L104.7 83.4L105.2 82.7L105.2 83.6L106.4 82.8L107.3 81.7L107.9 80.2L107.9 78.9L108.2 78.0L109.2 77.8L109.4 78.9L109.8 80.2L109.4 81.5L108.9 82.1L108.9 83.3L108.5 84.3L108.7 84.9L108.2 85.5L107.7 85.7L107.6 85.1L107.1 85.5L106.7 86.1L106.1 86.2L105.0 86.2L104.8 86.4L104.3 86.7L103.8 87.5L103.1 87.0L103.2 86.2L102.0 86.1L101.0 86.6L100.1 87.0L99.0 86.9ZM99.0 87.0L99.8 87.5L100.0 88.4L99.5 89.9L98.8 90.3L98.3 89.8L98.5 88.7L97.9 88.3L97.8 87.7L98.5 87.3L99.0 87.0ZM100.6 87.1L101.5 86.7L102.4 86.6L102.7 87.1L102.2 87.7L101.3 87.7L100.9 88.3L100.5 87.9ZM89.3 96.9L90.2 97.0L89.9 98.1L89.5 99.4L89.1 100.2L88.5 99.4L88.5 98.5L89.3 96.9ZM78.1 102.3L79.2 102.2L79.5 102.8L79.0 103.6L78.2 104.2L77.3 103.8L77.3 103.0ZM49.2 112.7L50.0 113.3L50.5 114.0L51.0 115.1L50.7 116.0L49.8 116.5L49.2 116.2L49.0 115.2L49.0 114.2ZM88.9 103.9L89.8 103.8L90.5 104.0L90.6 105.2L90.0 106.4L89.9 107.7L90.8 108.3L91.8 108.7L92.3 109.5L92.1 109.8L91.3 109.3L90.8 108.9L89.8 108.8L88.9 108.7L88.9 107.9L88.3 107.2L88.2 106.2L88.7 105.6L88.7 104.8ZM88.7 109.1L89.6 109.1L89.8 110.0L89.3 110.3ZM92.5 110.0L93.5 110.0L93.9 111.3L93.2 112.3L93.3 111.3L92.6 111.0ZM90.3 110.7L91.3 110.9L91.5 112.0L90.8 112.9L90.8 112.0L90.3 112.0ZM85.6 114.1L86.7 112.9L87.8 111.2L87.6 112.1L86.6 113.5L85.8 114.2ZM90.3 115.4L90.6 114.6L91.6 113.9L92.5 114.2L93.2 113.5L93.7 112.7L94.4 113.5L94.7 114.9L94.4 116.1L93.7 116.8L93.5 115.7L92.4 116.1L92.2 115.1L91.5 114.9L90.8 115.5ZM77.6 120.8L78.2 120.3L78.8 120.6L79.7 120.8L79.9 119.9L81.5 119.2L82.4 118.0L83.4 117.4L84.0 116.8L85.1 115.4L86.1 116.0L87.2 116.9L87.6 117.2L86.6 117.9L86.0 118.2L86.2 119.4L86.6 120.3L87.3 121.2L86.4 121.5L86.0 122.3L85.9 123.1L85.0 123.8L84.9 124.7L84.6 125.8L84.2 125.9L83.2 126.3L82.3 125.6L81.0 125.6L80.2 125.2L78.8 125.1L78.6 123.8L77.9 123.1L77.6 122.0L77.6 120.8ZM64.2 116.8L65.4 117.2L66.4 117.2L67.3 118.4L68.6 119.4L69.4 120.1L70.2 120.5L71.2 121.3L72.0 121.8L72.5 122.6L73.1 123.3L73.3 124.2L74.4 124.9L74.7 125.5L74.5 126.7L74.5 128.0L73.9 128.1L73.3 127.9L72.5 127.2L71.2 126.3L70.2 125.1L69.7 124.3L69.1 123.2L68.1 122.0L67.6 120.6L66.6 119.9L65.8 118.9L64.9 117.9L64.2 116.8ZM73.9 129.0L74.6 128.1L75.5 128.2L76.9 128.6L77.4 129.0L79.0 129.1L79.4 128.6L81.0 129.1L81.5 129.8L83.0 129.9L83.0 130.8L81.5 130.4L79.5 130.4L77.6 129.9L76.4 129.9L75.1 129.6L74.2 129.1ZM83.0 130.2L84.1 130.4L83.6 130.9L84.5 130.5L85.1 130.6L84.9 131.0L85.4 130.5L87.4 130.5L86.9 131.0L85.4 131.2L84.3 131.0ZM88.2 130.5L89.3 130.5L91.2 130.2L91.1 130.7L89.8 131.0L88.3 130.9ZM91.8 132.4L92.7 131.3L93.9 130.7L95.4 130.5L94.7 131.1L93.2 131.9L92.2 132.4ZM87.4 131.6L88.3 131.5L89.1 132.1L88.3 132.4L87.4 131.9ZM88.3 121.1L89.1 121.0L90.3 121.3L91.8 121.4L92.7 121.0L93.4 120.7L93.0 121.6L92.2 121.9L90.8 121.8L89.3 121.8L88.5 122.3L88.3 123.1L89.0 123.6L89.9 123.2L91.3 123.0L91.7 123.3L90.5 123.9L90.0 124.2L90.6 125.2L91.1 126.2L91.5 127.5L90.9 127.7L90.6 126.9L89.9 126.9L89.5 125.7L89.2 124.9L88.6 125.2L88.7 126.7L88.7 127.7L87.9 127.8L87.8 126.7L87.8 125.7L87.3 125.2L87.2 124.8L87.6 123.8L88.1 122.5L88.3 121.1ZM95.7 120.2L96.2 121.1L96.8 120.8L96.4 121.8L96.8 122.0L96.2 123.0L95.9 122.0L95.6 121.3ZM96.2 125.2L97.6 125.0L98.9 125.4L98.1 125.8L96.6 125.7ZM94.2 125.4L95.2 125.3L95.4 125.9L94.4 126.0ZM99.1 123.1L100.6 122.7L102.0 123.1L102.2 124.3L103.0 125.5L104.0 124.9L105.0 124.2L105.9 123.9L107.4 124.4L108.9 124.8L110.8 125.6L112.3 126.1L113.6 127.0L113.8 127.7L115.0 128.1L115.6 128.9L114.7 129.2L115.2 130.1L116.2 131.1L117.2 131.9L118.4 132.4L117.7 132.7L115.7 132.2L114.5 131.4L113.8 130.3L112.3 129.9L111.3 130.3L110.8 131.2L109.4 131.3L107.9 130.3L106.4 130.4L105.9 129.7L106.7 129.0L105.9 127.7L104.5 126.9L103.0 126.6L101.5 126.0L100.8 126.2L100.1 125.1L101.5 124.7L100.4 124.5L99.3 123.8L99.1 123.1ZM116.0 127.7L117.7 127.2L119.1 126.4L119.9 126.5L119.6 127.5L118.2 128.4L116.7 128.4ZM118.4 124.8L119.6 125.4L120.6 126.7L120.3 126.7L119.1 125.5ZM122.2 127.5L123.0 128.2L123.4 129.0L122.8 128.7ZM127.0 131.4L127.9 131.6L128.2 132.0L127.2 131.9ZM131.4 142.4L132.8 143.2L134.3 144.6L133.8 144.8L132.3 143.8ZM144.4 139.6L145.5 139.7L145.5 140.4L144.4 140.3ZM133.9 137.1L134.5 137.3L134.5 137.9L134.0 137.7ZM82.2 144.9L82.7 144.1L83.9 143.3L85.2 142.9L86.6 142.6L87.8 142.3L89.3 141.8L90.5 140.4L90.5 139.4L91.8 139.5L92.0 138.5L92.9 137.4L93.7 136.6L95.0 136.0L96.0 136.6L96.4 137.1L97.6 137.0L97.8 135.8L98.7 134.6L99.6 134.3L100.7 134.2L100.7 133.5L101.5 133.9L103.0 134.3L104.0 134.4L104.9 134.4L104.5 135.3L103.9 135.8L103.4 136.9L104.0 137.7L105.4 138.4L106.4 139.0L107.2 139.7L108.1 139.9L108.8 139.4L109.3 138.1L109.5 136.6L109.4 135.1L109.7 134.1L110.0 133.1L110.4 132.8L110.7 133.6L111.1 134.6L111.4 135.8L112.3 136.4L113.1 137.1L113.3 138.7L113.9 139.7L114.1 141.1L115.2 141.7L116.5 142.6L117.0 143.8L117.7 144.7L118.4 145.7L119.4 146.6L120.4 147.8L120.8 149.2L121.1 150.6L121.2 152.0L120.6 154.0L120.2 155.6L119.4 156.5L118.8 157.7L118.4 158.9L117.9 160.1L117.7 161.7L117.0 162.3L115.7 162.4L114.7 163.1L114.0 163.9L113.3 163.1L112.7 162.4L112.3 162.9L111.3 163.5L110.1 163.0L108.9 162.6L108.1 162.0L107.6 161.0L107.4 160.0L106.5 159.6L106.4 158.6L105.9 158.0L105.8 159.1L105.0 159.1L105.4 157.9L105.8 156.7L105.7 156.0L105.2 157.1L104.5 157.9L103.9 158.8L103.3 158.3L103.2 157.3L102.2 156.4L101.5 155.6L100.3 155.4L99.1 154.8L97.6 154.9L96.2 155.4L94.7 155.7L93.2 156.3L92.2 156.9L91.8 157.6L90.3 157.6L88.8 157.6L87.8 158.2L86.7 158.8L85.9 159.0L84.9 158.9L83.6 158.0L83.5 157.2L84.1 156.9L84.1 155.4L83.6 154.0L83.3 152.5L83.0 151.4L82.6 150.3L82.0 149.2L82.4 148.4L82.0 147.6L82.0 146.5L82.2 144.9ZM112.5 165.9L113.3 166.2L114.2 166.5L115.2 166.2L116.0 166.2L116.0 167.6L115.7 169.0L115.0 169.4L114.2 169.8L113.6 169.2L113.1 168.0L112.6 167.0L112.5 165.9ZM98.4 133.5L99.4 133.4L99.4 133.9L98.5 133.9ZM104.6 159.7L105.7 159.6L105.9 160.0L104.8 160.1ZM139.9 158.2L140.6 158.9L141.4 159.5L141.9 160.7L142.6 160.8L143.0 161.9L144.1 162.5L145.3 162.0L145.4 163.1L144.9 164.0L144.1 164.4L144.0 165.4L143.1 166.7L142.4 167.1L141.8 166.7L142.2 165.4L141.9 164.8L140.9 164.3L141.6 163.5L141.8 162.5L141.9 161.7L141.4 160.7L140.6 159.5L139.9 158.2ZM139.9 165.7L140.6 166.3L141.4 166.7L141.3 167.6L140.4 169.0L140.0 169.8L138.7 170.6L138.3 171.7L137.9 172.9L136.7 173.8L135.6 173.9L134.8 173.4L133.9 172.8L134.6 171.7L135.5 170.6L136.7 169.6L137.7 169.0L138.5 167.9L139.0 167.0L139.4 166.1L139.9 165.7ZM23.2 109.8L24.3 109.9L24.1 110.2L23.3 110.1ZM9.3 128.0L9.6 128.0L9.6 128.6L9.3 128.6ZM25.1 143.2L25.6 143.2L25.6 143.6L25.1 143.6ZM38.2 177.4L39.7 177.4L39.7 178.3L38.5 178.3ZM-205.0 292.4L-205.0 249.5L-197.2 250.9L-190.3 250.4L-185.4 249.5L-180.6 248.0L-175.7 246.2L-173.7 242.3L-171.8 238.2L-166.9 237.0L-162.0 234.4L-156.1 233.3L-151.2 231.5L-146.3 232.2L-141.4 232.6L-136.6 234.4L-131.7 235.5L-128.7 231.5L-129.2 227.1L-125.3 225.2L-122.9 227.1L-119.0 228.5L-115.0 228.8L-111.1 230.5L-107.2 230.1L-103.3 229.8L-100.4 228.1L-101.8 224.0L-102.3 220.4L-99.4 216.7L-97.4 217.6L-96.0 221.0L-95.0 216.7L-94.8 213.0L-93.0 209.8L-91.6 206.9L-89.6 204.9L-86.7 203.1L-84.7 202.9L-85.2 204.9L-87.7 205.8L-89.1 207.9L-90.1 210.3L-92.1 212.3L-93.0 215.4L-90.6 218.1L-89.1 222.5L-88.6 227.1L-88.6 232.2L-91.1 237.8L-96.5 243.1L-101.4 246.7L-103.3 253.4L-87.7 258.8L-73.0 258.8L-64.2 253.4L-62.2 246.7L-59.3 242.3L-56.4 239.8L-54.4 236.7L-50.5 232.9L-47.6 229.5L-43.7 227.1L-40.7 224.0L-38.8 222.5L-34.9 221.6L-31.0 221.0L-29.0 219.0L-26.1 219.8L-23.1 219.5L-20.2 219.2L-17.3 219.0L-14.3 218.1L-11.4 219.0L-7.5 220.1L-3.6 220.4L0.3 218.1L3.3 216.2L5.2 217.8L8.2 218.7L10.1 216.7L12.1 214.6L15.0 213.5L17.9 212.3L19.9 211.5L22.8 209.1L25.8 209.5L27.7 211.5L30.6 212.8L33.6 213.0L36.5 213.8L38.5 214.1L39.4 216.7L40.9 219.5L42.9 218.7L45.3 217.6L47.3 215.1L49.2 213.8L51.2 212.3L54.1 211.3L57.0 211.0L59.0 211.3L61.9 210.3L64.9 210.0L67.8 209.1L70.7 208.6L73.7 209.8L76.6 210.5L79.0 209.1L81.5 208.6L84.4 210.8L87.4 211.5L90.3 210.5L93.2 210.0L96.2 211.3L99.1 209.3L102.0 209.3L105.0 209.8L107.9 210.8L110.8 211.3L113.8 213.0L116.7 214.8L119.6 215.6L122.6 217.0L125.5 217.6L128.4 220.1L130.9 221.3L133.3 221.3L135.3 222.8L137.7 224.0L137.2 228.1L135.3 230.8L133.3 234.4L131.4 237.8L130.4 243.1L131.4 247.6L134.3 248.5L137.2 248.5L142.1 249.5L147.0 249.5L147.0 292.4ZM158.7 36.5L160.2 29.8L163.6 27.3L165.1 24.2L170.0 21.2L174.4 22.7L178.3 23.9L182.2 25.1L185.1 26.2L189.0 27.9L191.0 26.8L194.9 25.1L197.8 23.9L200.3 26.8L203.7 25.6L207.6 27.9L210.6 30.8L214.5 31.1L216.9 32.6L217.4 29.2L220.3 29.2L223.3 31.1L226.7 31.1L227.7 29.0L229.1 30.0L229.3 25.6L228.8 21.2L230.1 19.1L231.6 21.2L233.0 24.5L234.0 27.3L234.7 29.8L237.0 31.8L237.9 28.4L239.4 25.9L242.3 25.9L243.5 28.4L242.8 31.8L243.5 33.1L241.4 34.8L238.9 35.1L238.9 38.4L237.0 39.7L234.5 41.7L232.1 44.5L230.6 48.5L230.4 50.8L232.1 51.4L232.6 54.1L235.0 54.1L237.4 55.9L239.9 57.1L242.5 57.5L242.6 61.0L243.8 62.7L244.8 63.8L245.8 63.4L246.0 61.3L245.5 58.5L247.2 56.6L248.1 54.1L246.2 51.0L247.2 48.5L246.7 43.9L249.2 43.9L251.1 44.1L253.1 45.9L254.8 46.7L255.0 50.4L257.0 51.8L258.5 50.8L259.8 47.9L260.9 50.4L262.4 53.2L263.1 55.9L265.8 58.0L267.0 59.0L268.2 61.3L268.4 62.6L267.3 63.5L265.3 64.9L263.4 65.4L260.4 65.2L258.0 65.5L257.0 66.9L255.0 68.8L253.6 70.4L254.6 70.1L256.2 67.9L258.0 67.0L260.0 67.2L260.0 68.2L258.7 68.7L259.6 70.0L259.9 71.2L261.4 71.8L262.9 72.1L264.3 70.3L264.4 71.7L263.2 72.6L260.9 73.5L258.8 75.0L258.3 73.9L259.9 72.4L258.5 72.6L257.3 73.3L255.5 74.2L254.3 75.0L253.8 76.2L254.0 77.1L254.6 77.4L253.3 77.6L252.1 78.0L250.6 78.7L250.6 79.9L249.7 81.0L249.4 82.1L248.7 83.3L248.8 84.5L249.2 85.4L248.1 86.1L246.7 87.0L245.6 87.9L244.0 89.1L243.5 90.4L243.4 91.5L244.2 93.3L244.7 95.1L244.5 96.7L243.7 96.8L243.0 95.7L242.1 94.1L242.0 92.8L240.9 91.5L239.4 91.8L238.4 91.1L236.5 91.2L235.6 92.5L234.5 92.4L233.0 92.0L231.1 92.0L229.8 92.8L228.2 94.0L227.8 96.0L227.4 98.1L227.4 99.9L228.0 101.6L228.8 103.1L230.1 103.8L231.1 104.2L232.6 103.8L234.0 103.4L234.5 101.5L235.5 101.0L237.0 100.7L238.0 101.0L237.4 102.5L237.2 104.1L236.7 104.9L236.2 106.5L237.4 106.7L238.9 106.5L240.4 106.7L241.6 107.5L241.4 109.0L241.2 110.9L241.6 112.0L242.5 113.2L243.8 113.7L245.0 113.1L246.0 113.0L247.3 113.8L246.8 115.2L246.4 114.3L245.3 113.6L244.5 114.2L244.3 115.1L243.1 114.7L241.8 114.2L241.2 113.5L239.9 112.5L239.1 111.6L237.9 109.8L237.2 109.2L235.5 109.0L233.5 108.5L231.6 106.9L230.3 106.1L228.6 106.8L226.7 106.1L224.7 105.4L223.3 104.5L221.3 103.5L219.7 102.0L220.0 100.8L219.4 99.2L217.6 97.3L216.1 96.1L215.6 94.9L214.5 93.8L213.2 92.6L212.5 90.6L210.8 89.6L210.8 91.0L212.0 92.8L212.8 94.1L214.0 96.0L215.0 97.6L215.9 99.0L215.2 99.2L213.7 97.6L213.2 96.0L211.3 94.6L210.8 93.2L209.8 91.3L208.9 89.6L208.4 88.4L207.3 87.1L206.4 86.7L205.1 86.2L204.4 84.9L203.7 83.4L203.1 82.3L202.0 81.0L201.5 79.2L201.6 77.2L201.3 75.9L201.8 73.6L201.8 71.2L201.1 68.2L202.7 68.4L203.0 69.7L203.3 68.2L202.6 66.9L201.3 65.7L199.3 64.5L198.1 63.4L197.8 61.3L196.4 59.8L195.6 58.3L194.6 56.4L193.6 54.7L192.2 52.7L190.7 51.4L189.5 51.9L188.1 50.4L186.3 48.9L184.2 48.3L181.7 48.3L179.8 46.7L178.0 46.9L177.8 48.5L176.3 49.9L174.6 50.1L175.1 47.5L176.3 46.1L174.9 46.5L173.9 48.1L172.9 49.9L172.1 51.0L171.0 52.7L169.8 54.1L168.0 55.6L166.1 56.8L164.3 57.6L162.9 58.1L161.9 58.3L163.3 57.3L165.1 56.1L166.6 55.0L168.0 53.8L169.0 51.8L169.3 50.6L168.0 50.8L166.6 51.2L164.8 51.0L164.6 48.9L162.8 48.9L161.5 46.9L160.7 44.9L161.7 42.8L162.6 41.9L165.1 41.3L165.6 39.3L163.8 38.8L162.0 39.1L160.2 37.7L158.7 36.5ZM236.5 13.8L239.9 13.1L243.8 13.4L246.7 16.1L249.7 18.7L253.1 21.5L256.0 24.5L257.2 27.9L260.4 31.1L262.8 33.6L260.9 37.9L259.7 41.5L258.0 42.4L259.2 44.5L257.0 43.0L255.0 43.9L253.1 42.4L251.1 39.5L248.7 39.5L246.7 38.6L247.2 36.7L250.2 36.7L251.1 33.6L251.9 31.1L250.2 29.5L248.2 27.9L246.7 25.1L245.3 25.6L243.3 25.1L240.4 25.1L238.4 23.6L236.5 23.6L235.3 20.6L237.0 21.5L239.9 21.5L239.4 17.5L238.1 14.8L236.5 13.8ZM207.1 20.3L208.1 16.5L211.0 14.8L214.5 16.5L217.4 15.1L219.8 14.8L220.3 19.1L221.0 22.7L224.0 25.6L223.0 28.1L219.8 27.9L216.9 28.7L213.5 29.0L211.5 27.3L209.1 27.0L208.3 25.1L210.6 23.6L207.1 20.3ZM200.3 19.4L201.3 13.1L203.7 10.6L207.6 11.7L210.1 14.5L206.9 18.1L205.2 20.6L202.7 21.8L200.3 19.4ZM228.6 6.8L233.0 1.9L237.0 2.7L240.9 3.2L244.8 6.0L244.5 9.8L238.9 10.6L233.5 9.8L232.6 6.0L228.6 6.8ZM229.5 12.7L233.0 12.0L234.7 13.1L234.8 16.1L232.8 18.1L231.3 19.4L229.6 17.1L229.5 12.7ZM222.8 15.8L225.2 13.1L227.4 13.1L228.2 17.5L226.5 20.9L223.8 19.4L222.8 15.8ZM208.6 6.4L211.5 3.2L216.4 1.9L219.6 5.6L219.4 8.7L216.4 9.5L212.5 10.6L211.0 8.7L208.6 6.4ZM220.8 2.7L225.2 1.9L227.2 2.7L227.5 7.6L224.9 8.7L222.3 6.8L220.8 2.7ZM225.7 27.3L227.7 25.6L229.6 27.9L228.6 29.2L226.2 29.0ZM237.9 37.2L239.4 35.8L240.9 37.2L243.3 39.3L244.5 40.8L241.8 41.7L239.4 41.9L238.4 40.6L239.1 39.5L237.9 37.2ZM229.1 -3.0L229.1 -14.2L264.3 -14.2L261.4 -7.8L252.6 -6.3L248.7 -3.9L246.7 0.6L244.8 4.0L241.8 2.7L237.9 3.2L235.5 2.3L236.0 -1.2L232.1 -2.1L229.1 -3.0ZM202.7 4.0L205.7 -0.3L209.6 -0.7L209.6 2.7L206.6 5.2L202.7 4.0ZM265.0 69.1L266.8 69.2L268.4 70.3L270.2 70.5L271.2 70.7L271.5 69.2L270.7 67.9L270.4 66.6L268.7 65.8L268.5 63.4L267.3 64.1L266.5 66.0L265.5 67.8L265.0 69.1ZM197.6 64.5L199.8 64.9L201.0 66.3L202.2 67.9L201.0 67.8L199.5 66.7L198.0 65.5L197.6 64.5ZM193.0 59.2L194.2 59.3L194.7 62.1L193.4 61.0L193.0 59.2ZM171.9 53.1L173.9 52.3L174.2 53.6L172.6 54.5L171.9 53.1ZM260.1 70.4L262.2 70.8L261.9 71.5L260.4 71.1ZM259.9 65.8L262.4 66.6L262.6 67.0L260.6 66.7ZM250.6 78.8L252.6 78.1L252.1 78.7L250.8 78.9ZM251.6 -5.3L254.1 0.6L256.0 4.0L258.0 4.8L261.4 4.0L264.8 5.6L266.3 8.7L267.8 12.4L268.7 16.5L269.5 20.6L269.7 23.6L272.6 24.5L273.1 27.3L270.7 29.2L270.7 33.1L271.9 36.7L272.8 40.2L274.1 43.4L275.6 46.5L278.0 48.1L280.0 48.7L281.0 47.9L281.4 45.1L282.6 42.4L283.6 39.1L285.8 36.5L287.8 35.8L290.7 32.3L293.7 30.3L297.1 29.0L300.5 25.6L301.5 23.6L300.0 22.1L301.5 19.7L299.5 17.1L301.5 14.1L303.0 10.6L303.9 6.0L303.4 0.6L304.9 -3.9L305.4 -14.2L251.6 -14.2L251.6 -5.3ZM299.1 36.7L300.5 34.6L302.0 36.7L303.2 35.3L305.2 35.3L307.1 34.3L308.7 35.3L309.7 37.7L308.6 39.3L306.9 40.6L304.6 41.5L303.0 41.1L300.9 40.4L301.5 39.1L299.6 38.4L301.3 37.4L299.1 36.7ZM240.0 100.3L241.6 99.3L243.3 99.1L245.3 99.6L247.2 100.5L249.2 101.5L250.4 102.1L249.2 102.4L247.1 102.4L247.2 101.7L246.2 101.3L245.0 100.6L243.3 100.1L242.0 99.6L240.9 100.2L240.0 100.3ZM250.3 103.9L251.4 102.5L252.9 102.5L254.6 102.6L256.0 103.7L255.0 104.1L253.9 104.1L253.0 104.7L251.8 104.2L250.3 103.9ZM246.4 104.0L248.2 104.1L248.4 104.5L246.9 104.6ZM257.3 103.9L258.8 104.0L258.6 104.4L257.4 104.4ZM246.4 96.8L247.0 96.9L247.2 97.9L246.5 97.7ZM262.6 111.8L263.4 111.7L263.4 112.4L262.6 112.4ZM247.3 113.8L247.9 114.5L248.7 113.2L249.2 111.9L249.9 111.4L251.1 111.2L252.4 110.5L253.1 110.1L253.3 110.8L252.7 111.3L253.0 112.1L253.6 113.0L253.2 111.6L254.4 111.0L254.8 110.4L255.7 111.1L256.3 111.9L258.5 111.9L259.9 112.3L261.4 111.8L262.4 111.9L262.9 112.7L263.8 114.0L265.3 114.5L266.3 115.6L267.3 116.4L268.7 116.5L270.2 116.6L271.7 117.4L272.6 118.1L273.3 119.9L274.1 120.6L274.1 121.8L273.1 122.4L273.6 123.3L275.6 123.0L276.1 123.5L278.0 123.5L279.5 124.5L280.5 124.7L282.4 125.1L283.9 125.1L285.4 125.9L286.6 127.0L288.3 127.4L288.8 128.7L289.0 130.1L288.3 131.6L287.3 132.7L286.3 134.1L285.2 135.1L284.9 136.6L284.9 138.7L284.4 140.4L283.6 142.5L282.9 144.1L281.9 145.3L280.5 145.4L279.3 145.7L277.7 146.5L276.3 147.6L275.5 148.6L275.5 150.3L275.1 151.6L273.9 153.4L272.8 154.8L271.9 155.9L270.8 157.5L269.7 158.5L268.2 158.8L266.8 158.3L265.9 157.7L265.9 158.6L267.1 159.5L267.5 160.7L266.7 162.5L265.3 163.4L263.4 163.8L262.2 163.8L262.1 165.7L260.9 166.5L259.4 166.3L259.4 167.9L260.7 168.3L259.6 169.2L259.2 171.0L258.0 172.0L257.0 173.1L258.0 174.5L258.7 175.6L257.5 177.0L256.7 178.6L255.7 179.4L255.3 180.9L256.1 182.5L254.6 182.8L253.6 184.6L252.1 184.5L250.8 183.3L249.7 181.2L249.2 178.6L249.1 175.9L249.2 174.2L250.4 172.7L251.1 170.7L251.6 168.3L250.8 167.0L250.9 164.8L251.3 162.9L251.0 161.5L251.8 159.5L252.7 157.5L253.1 155.4L253.1 153.1L253.3 151.4L253.8 149.7L254.1 147.6L254.2 145.6L254.4 143.3L254.3 140.8L253.3 139.8L252.1 139.1L250.6 138.2L249.5 137.3L248.4 136.1L248.3 135.3L247.5 134.2L246.9 132.8L246.2 131.4L245.6 130.1L244.9 129.1L243.6 128.2L243.5 126.9L244.5 125.6L245.0 124.7L243.9 124.5L244.0 123.3L244.7 122.3L244.8 121.4L245.9 120.9L246.2 119.9L247.2 119.1L247.4 118.2L247.3 116.9L247.3 115.8L246.8 115.2L247.3 113.8ZM255.9 183.1L256.3 184.1L257.5 185.6L259.2 186.5L258.0 187.1L256.0 187.6L254.6 187.5L253.1 186.3L252.6 185.3L254.1 185.3L254.3 183.6L255.0 183.0ZM263.2 181.6L264.8 180.9L266.5 181.4L265.3 182.5L263.6 182.3ZM250.4 167.5L251.1 167.6L251.1 169.5L250.3 169.4ZM317.2 84.8L317.8 84.6L318.8 85.5L320.1 85.4L321.0 85.6L322.5 84.8L324.0 83.9L325.9 83.4L327.9 83.6L329.8 83.2L331.8 83.1L333.0 82.9L333.8 83.3L333.3 84.3L333.5 85.1L332.9 86.6L333.3 87.3L334.0 87.9L335.2 88.2L336.2 88.2L337.9 88.8L338.2 89.7L339.6 90.4L341.1 91.1L342.3 91.0L342.7 90.2L342.6 89.0L343.5 88.3L345.0 88.3L345.7 89.0L347.4 89.6L349.4 90.0L351.4 90.5L352.6 90.0L353.5 89.8L354.6 90.0L354.9 91.5L354.7 92.1L355.3 93.5L356.0 94.6L356.7 96.3L357.7 98.1L357.9 99.2L359.1 100.2L359.4 101.3L359.5 102.9L359.7 103.8L360.6 104.4L361.3 106.1L361.8 107.3L363.1 108.3L364.4 109.3L365.2 110.0L365.3 111.0L366.3 112.0L367.8 111.7L369.4 111.4L371.2 111.1L373.1 110.6L373.0 112.0L372.5 113.3L371.7 114.6L370.9 116.4L369.9 117.9L368.5 119.6L367.0 120.5L365.5 121.6L364.1 123.2L363.1 124.3L362.4 124.9L361.8 126.5L361.1 128.0L361.5 129.1L361.4 130.4L361.9 131.9L362.6 132.8L362.6 134.6L362.8 136.6L362.4 138.2L361.1 139.1L359.7 139.8L358.7 140.9L357.2 142.2L357.0 143.3L357.6 144.4L357.7 146.2L356.7 147.3L355.3 148.1L355.1 149.7L354.8 151.4L353.8 152.5L352.8 154.0L351.6 155.4L350.4 156.5L348.9 157.5L348.0 157.7L346.5 157.8L344.5 157.9L342.6 158.6L341.4 158.2L341.0 157.6L340.6 156.3L340.9 155.1L339.9 153.4L339.1 151.6L338.0 149.7L337.6 147.6L337.2 145.4L336.9 144.4L336.0 142.8L334.7 140.4L334.5 138.7L334.9 137.1L335.2 135.6L336.3 134.4L336.5 133.1L336.0 131.4L335.5 129.7L335.0 128.3L334.8 127.2L334.0 126.1L332.8 124.9L332.0 124.1L331.6 123.1L332.3 122.3L332.3 121.3L332.6 120.1L332.6 119.1L332.3 118.5L331.5 117.8L330.3 118.0L329.1 118.1L328.3 117.2L327.4 116.2L325.9 116.0L324.5 116.2L323.5 116.6L322.5 117.1L321.0 117.6L319.9 117.3L318.6 117.2L317.1 117.5L315.7 118.0L314.7 117.5L313.7 116.7L312.4 115.8L311.8 115.5L310.8 114.9L310.1 113.8L309.6 112.9L308.6 111.9L308.1 111.3L307.2 110.5L306.6 109.9L306.8 109.0L306.1 107.8L306.7 106.7L307.1 105.4L307.4 104.1L307.0 102.9L306.7 101.6L306.4 101.1L307.1 99.7L307.4 98.4L308.3 97.3L308.8 96.0L309.8 94.9L310.4 93.9L312.0 93.0L313.0 92.3L313.5 91.2L313.4 89.9L314.0 88.7L314.9 87.6L316.2 86.9L316.8 85.7L317.2 84.8ZM371.2 134.2L371.8 135.6L372.3 137.4L371.6 138.2L371.3 139.7L370.7 141.7L370.1 143.8L369.5 146.0L369.0 147.6L367.5 148.1L366.2 147.7L365.7 146.3L365.3 144.6L365.8 143.1L366.4 142.1L366.1 140.5L365.9 139.5L366.7 138.4L368.2 137.8L369.4 136.9L370.1 135.7L371.2 134.2ZM314.2 83.3L314.4 82.1L313.7 81.2L314.3 79.6L314.5 78.0L314.3 76.7L313.9 75.6L315.2 74.7L317.1 74.8L319.1 75.1L321.2 75.1L321.8 73.3L321.8 71.5L320.8 70.1L320.1 69.2L318.6 68.8L318.3 68.1L320.1 67.5L321.4 67.8L321.2 66.1L321.8 66.6L323.2 66.4L324.5 65.4L324.6 64.3L325.4 64.0L326.4 63.4L327.1 62.3L327.7 61.0L328.4 60.5L329.8 60.1L331.0 60.0L331.6 59.3L331.4 57.6L331.0 56.3L330.9 54.1L332.4 53.8L333.4 52.9L333.2 54.9L333.7 55.4L333.0 56.3L332.5 57.3L332.8 58.3L333.8 58.8L333.7 59.3L334.7 59.0L335.7 58.7L336.9 59.5L337.2 59.0L338.9 58.5L340.6 58.0L341.3 58.7L342.2 58.7L343.0 57.8L343.5 57.1L343.5 54.5L344.1 53.2L345.1 52.9L345.7 54.1L346.7 54.0L346.9 51.8L346.0 51.2L345.9 50.1L347.2 49.5L348.4 49.3L350.4 49.5L351.4 48.7L352.5 48.7L351.4 47.7L349.9 47.5L347.4 48.1L345.5 48.7L344.5 47.7L343.8 46.7L344.0 44.5L343.7 42.2L345.0 40.6L346.5 38.8L347.7 37.4L347.7 36.5L346.7 36.0L344.8 36.0L344.0 38.6L343.2 40.6L341.6 41.9L340.4 43.4L339.9 45.1L339.8 47.1L341.1 48.3L341.5 49.3L340.4 50.8L339.3 51.9L339.3 53.8L338.8 55.4L338.2 55.7L337.2 55.9L336.9 56.8L335.7 57.0L335.5 55.6L335.2 54.5L334.6 53.1L334.0 50.8L333.6 49.9L333.3 49.5L333.0 50.4L332.1 51.0L331.0 52.1L329.8 52.3L328.5 51.2L328.1 49.5L327.9 47.5L327.8 45.9L328.0 44.3L329.4 43.0L331.0 41.5L332.6 41.1L333.3 39.3L334.5 37.4L335.5 35.1L336.2 33.1L337.5 31.1L338.6 29.2L340.1 27.0L341.6 25.6L343.5 24.8L345.0 23.3L347.0 22.1L348.4 22.1L350.4 22.1L351.8 23.0L353.3 24.2L352.3 25.9L353.8 26.2L355.3 26.8L357.2 27.3L359.2 28.4L361.6 30.5L363.1 32.6L363.3 34.3L362.1 35.1L360.2 35.1L358.2 34.6L356.7 34.1L355.3 33.6L354.8 32.8L355.8 34.6L356.9 36.0L357.0 39.1L358.2 40.2L359.7 40.4L360.2 39.3L361.6 38.8L362.6 38.8L362.1 36.7L362.6 35.5L364.1 34.3L365.5 34.8L366.2 34.1L365.8 32.3L366.0 29.2L365.3 28.7L367.0 29.2L368.5 30.5L368.5 32.6L367.0 33.1L368.0 33.6L369.6 33.1L370.4 31.3L371.9 30.5L373.8 29.2L375.3 28.1L376.3 29.8L377.8 29.0L379.7 28.1L381.2 29.5L382.6 28.1L382.2 25.6L383.6 25.9L385.6 27.0L387.0 27.9L388.5 28.4L390.0 30.0L390.5 27.9L389.0 25.9L388.3 22.7L388.5 20.0L390.0 16.8L391.0 15.1L392.9 15.8L394.2 16.8L394.2 20.6L393.6 24.2L393.9 27.9L394.9 30.5L394.7 33.1L393.2 34.3L393.9 35.1L395.8 33.1L396.1 29.8L397.8 28.4L398.8 30.0L399.0 31.8L400.0 31.6L399.3 29.5L397.3 27.3L395.4 27.3L395.2 24.5L395.8 22.1L394.9 19.7L396.1 16.5L397.3 19.1L399.3 21.2L398.8 18.4L400.2 17.8L402.0 19.1L403.7 19.7L402.2 15.8L401.7 13.8L404.2 13.4L407.1 12.7L408.1 10.6L407.6 8.7L409.5 7.2L412.0 6.0L414.9 4.4L417.8 4.4L420.8 2.7L422.7 -0.7L425.0 -2.5L426.6 -1.2L425.7 1.9L428.6 1.9L431.5 1.9L434.0 4.8L434.0 7.9L431.0 10.9L430.6 13.1L432.5 12.7L434.0 14.5L436.4 13.4L438.9 14.5L439.8 15.8L443.3 13.4L445.2 13.8L447.2 14.1L449.1 15.8L448.6 18.4L450.1 22.1L451.6 22.7L452.6 20.0L454.5 20.6L457.0 20.9L458.9 20.6L459.7 17.8L460.9 16.5L463.3 17.1L465.8 18.1L468.2 18.4L469.7 20.3L471.6 22.4L474.6 21.8L477.5 22.4L479.4 25.1L479.9 26.2L481.9 26.2L484.3 26.5L486.8 25.6L488.2 25.6L489.2 27.9L490.2 25.4L492.2 25.6L495.1 25.9L497.5 27.0L499.0 28.1L501.4 29.8L503.4 31.3L504.9 32.8L507.3 34.3L509.0 35.3L508.0 36.7L506.5 38.6L505.8 39.5L504.4 39.3L502.9 37.2L501.0 36.7L500.5 35.1L499.3 36.3L498.5 38.4L497.5 38.8L496.6 38.6L497.5 40.6L498.5 42.4L497.5 43.6L496.1 43.4L494.1 44.7L492.6 45.3L491.4 46.5L489.7 48.5L488.2 47.7L486.3 47.7L484.8 48.3L483.8 48.9L482.9 49.9L482.6 51.4L481.6 52.7L482.4 54.1L482.2 55.6L481.2 55.9L481.4 57.6L480.4 58.5L479.4 59.7L479.2 60.8L478.0 61.3L477.5 62.9L476.2 64.3L475.8 62.6L475.5 60.1L475.1 57.6L475.2 55.0L476.3 53.2L477.5 51.9L479.2 50.1L480.9 48.1L482.4 46.5L483.2 44.9L483.4 43.2L481.9 44.9L479.9 44.9L479.0 45.1L477.5 44.9L476.3 45.5L474.6 47.5L473.9 48.9L474.6 49.9L472.6 50.3L471.1 50.4L470.2 49.3L468.2 49.7L465.8 49.9L463.3 49.9L461.8 50.4L460.4 52.3L458.4 54.5L457.4 56.3L455.5 58.0L457.0 59.3L457.7 59.8L459.4 59.0L460.4 60.1L461.2 60.6L460.9 62.6L460.4 64.9L460.2 67.9L458.9 69.8L457.9 71.2L456.5 73.2L455.0 75.0L453.5 75.9L452.1 75.4L451.1 76.2L450.3 76.7L449.8 78.3L448.2 79.6L447.7 80.3L448.4 81.2L449.3 82.7L449.6 84.5L449.3 85.4L448.2 85.8L446.7 86.4L446.5 85.4L446.8 84.3L446.9 83.3L446.2 82.4L445.4 82.3L445.0 81.7L445.5 80.3L444.6 79.7L443.3 80.1L442.1 80.8L441.5 81.1L442.3 79.0L441.3 78.4L440.1 79.7L438.9 80.7L438.2 81.3L439.2 82.2L439.6 83.1L440.8 82.3L441.8 82.7L442.8 83.1L441.8 83.7L440.8 84.4L439.6 85.6L440.1 86.6L440.9 87.9L442.0 89.4L442.2 90.5L441.1 91.0L442.1 91.6L442.1 93.0L441.3 94.0L440.3 95.2L439.8 96.4L438.9 97.5L437.9 98.4L436.7 99.3L435.0 99.7L434.0 100.0L432.5 100.6L431.0 101.0L430.8 101.9L430.4 101.8L430.4 100.9L429.1 100.6L428.1 101.1L427.2 102.0L426.4 103.1L426.6 104.1L427.6 105.4L428.9 106.4L429.6 107.7L429.9 109.5L429.8 110.8L428.6 111.7L427.6 112.1L427.1 112.9L426.0 113.7L425.5 113.0L425.7 112.3L424.7 112.0L423.7 111.3L423.2 110.5L421.8 109.8L421.6 109.1L421.0 109.1L420.8 110.0L420.4 111.2L420.0 112.5L420.1 113.3L420.8 114.0L421.2 115.1L422.2 115.6L423.0 116.2L423.7 116.9L424.1 118.1L424.1 119.4L424.7 120.3L424.9 120.9L424.2 121.0L423.2 120.2L422.1 119.6L421.6 118.6L421.3 117.4L421.1 116.2L420.5 115.6L419.8 114.6L419.1 114.4L419.2 113.0L419.5 111.7L419.5 110.5L419.0 109.0L418.6 107.5L418.4 106.0L417.6 105.5L416.4 106.7L415.4 106.5L415.3 104.9L414.9 103.6L414.4 102.5L413.4 101.6L413.0 100.5L412.5 99.7L411.5 99.6L410.8 100.3L409.5 100.6L408.1 100.9L407.9 101.8L406.6 102.5L405.6 103.5L404.4 104.7L403.5 105.8L402.2 106.5L401.4 107.2L401.3 108.5L401.5 109.5L401.1 110.5L401.0 112.0L400.4 113.0L399.6 113.5L399.0 114.3L398.3 114.1L397.6 113.0L397.1 111.3L396.3 110.0L395.9 108.7L395.6 107.5L394.9 105.9L394.4 104.4L394.2 103.2L394.2 101.8L394.0 100.8L392.9 101.4L391.9 101.5L390.7 100.2L391.4 99.4L390.3 99.0L389.5 98.3L388.8 97.4L388.1 96.6L386.6 96.7L385.1 96.7L383.3 96.8L381.7 96.6L380.5 96.4L379.1 96.2L378.5 94.9L377.3 95.1L376.3 95.3L375.1 94.9L374.3 94.2L373.4 93.8L372.7 92.6L372.1 91.4L370.9 91.1L370.1 91.5L369.8 92.3L370.4 93.2L371.2 94.4L372.0 95.2L372.1 96.3L372.7 97.3L372.8 96.3L373.5 96.0L373.5 97.3L373.6 98.0L374.8 97.9L376.1 97.8L377.1 96.8L378.0 95.7L378.2 97.0L378.5 97.8L379.7 98.3L380.7 99.2L381.5 99.8L380.7 101.0L380.0 101.9L379.4 103.4L378.2 104.4L377.0 105.0L375.3 105.7L374.0 106.4L372.4 107.5L370.9 108.3L369.4 108.9L367.5 109.5L366.5 109.8L365.5 109.8L365.0 108.7L364.8 107.5L364.8 106.1L363.9 104.6L362.9 102.9L361.6 101.5L361.1 100.2L360.6 98.6L359.6 97.6L359.0 96.2L358.0 94.6L357.1 93.5L357.2 92.2L356.9 93.2L356.5 94.0L355.8 93.2L355.3 92.4L354.9 91.5L354.6 90.0L355.8 90.3L356.5 89.9L357.0 88.9L357.3 87.9L357.8 86.9L358.2 85.7L358.1 84.6L358.4 83.7L357.7 83.8L356.8 83.6L355.8 84.3L354.3 84.2L353.0 83.6L352.0 84.2L350.9 83.6L349.9 83.3L349.6 82.3L348.9 81.5L349.2 80.6L348.6 80.1L348.7 79.4L349.7 79.0L351.2 79.0L351.8 78.5L351.5 78.1L352.5 78.0L353.8 78.0L355.1 77.1L356.2 77.0L357.3 76.8L358.2 77.6L359.2 78.0L360.6 78.3L362.1 78.3L363.6 77.6L363.7 76.6L362.9 75.5L361.6 74.7L360.6 73.7L359.6 73.2L359.2 72.5L360.0 71.5L360.4 70.5L361.3 69.8L360.2 69.8L359.0 70.4L357.7 70.8L357.2 71.4L357.7 72.4L358.7 72.5L357.7 72.9L356.7 73.5L355.9 73.7L355.7 72.6L354.8 72.2L355.8 71.5L354.8 71.4L354.1 70.7L353.1 70.8L352.3 71.8L352.0 72.6L351.2 73.6L351.0 75.0L350.3 75.6L350.0 76.4L350.4 77.1L351.3 77.9L350.6 78.3L349.9 78.4L349.2 78.8L348.6 79.3L348.6 78.5L347.6 78.4L346.8 78.5L346.3 79.2L345.9 79.6L345.4 78.9L345.1 79.6L345.5 80.4L345.7 81.1L346.5 81.8L346.6 82.4L345.7 82.2L345.7 82.9L345.3 83.8L344.8 83.8L344.2 83.4L343.7 82.4L344.0 81.8L343.5 81.3L343.0 80.4L342.4 79.6L342.0 78.9L342.1 77.6L341.8 77.0L341.1 76.3L340.1 75.6L338.9 75.0L338.0 74.0L337.5 72.9L336.9 72.6L336.4 73.1L336.4 71.9L335.7 71.9L335.0 72.5L335.1 73.6L335.5 74.4L336.4 75.0L336.9 76.3L337.7 77.0L338.7 77.1L338.5 77.6L339.6 78.3L340.6 78.8L341.1 79.4L340.6 79.7L339.8 79.0L339.2 79.6L339.2 80.1L339.7 80.8L339.2 81.3L338.7 82.1L338.4 82.1L338.6 81.1L338.7 80.2L338.4 79.6L337.7 79.2L337.2 78.7L336.6 78.3L335.7 77.9L334.9 77.2L334.2 76.4L333.3 75.6L333.1 74.7L332.6 74.2L331.6 73.7L330.9 74.4L330.1 74.7L329.5 75.4L328.4 75.4L327.4 75.1L326.7 75.0L326.0 75.6L326.1 76.6L326.1 77.2L325.2 77.9L324.0 78.3L323.6 78.8L323.0 79.8L322.7 80.4L323.2 81.1L322.5 81.7L322.2 82.6L321.3 82.9L320.8 83.7L319.6 83.7L318.7 83.7L317.8 84.4L317.1 84.3L316.7 83.6L316.2 83.1L315.2 83.3L314.2 83.3ZM317.4 65.5L318.6 65.2L319.6 65.2L319.8 64.6L321.0 64.8L322.0 64.6L323.3 64.5L324.4 64.0L324.4 63.5L323.6 63.4L324.0 62.9L324.7 61.6L324.3 61.0L323.3 61.1L323.3 60.5L322.8 59.8L322.7 59.0L321.8 58.3L321.5 57.3L321.2 56.4L320.6 55.9L319.8 55.9L320.3 55.2L320.8 54.1L321.2 53.1L320.1 52.9L319.1 53.1L319.6 52.3L320.0 51.2L318.9 51.2L318.1 51.2L317.8 52.3L317.3 53.4L317.5 54.9L317.6 55.9L317.4 57.0L318.1 57.1L318.3 57.8L318.2 58.1L319.1 58.0L319.7 57.8L319.5 58.7L320.2 59.2L320.1 60.1L319.9 60.5L318.8 60.3L318.5 61.1L319.0 61.6L318.9 62.3L317.9 62.7L318.1 63.2L319.1 63.2L319.9 63.5L320.3 63.2L319.6 63.8L318.8 63.8L318.6 64.5L317.9 65.2L317.4 65.5ZM313.2 63.2L314.2 63.4L315.0 62.9L316.2 62.4L316.8 62.3L317.1 61.1L317.0 60.1L316.9 59.3L317.5 58.8L317.4 58.0L316.9 57.3L315.9 57.1L315.0 57.5L314.7 58.5L313.2 58.8L313.4 60.1L314.2 60.6L313.7 61.3L313.3 62.3L312.9 62.7L313.2 63.2ZM335.2 82.1L336.2 81.8L338.3 81.7L337.9 82.8L337.8 83.7L337.0 83.3L335.3 82.6ZM331.0 78.4L332.0 78.0L332.5 78.9L332.4 80.4L331.8 80.7L331.2 80.7L331.2 79.2ZM331.4 76.4L332.2 75.6L332.3 77.0L332.0 77.8L331.5 77.4ZM346.0 85.0L347.4 85.2L348.7 85.5L347.4 85.8L346.0 85.5ZM354.6 85.7L355.3 85.4L356.7 84.9L356.1 85.7L355.3 86.2ZM325.3 80.1L326.1 79.7L326.3 80.2L325.8 80.4ZM333.8 56.4L335.2 55.7L335.2 57.1L334.5 58.0L333.9 57.3ZM340.8 52.5L341.6 52.7L341.3 54.0L340.7 54.0ZM373.4 20.3L374.8 22.4L377.3 23.3L379.2 23.3L378.2 20.6L377.6 17.5L378.5 15.1L380.5 12.4L382.8 9.5L386.1 7.2L390.5 3.2L390.7 0.6L387.5 -0.7L383.6 1.5L379.7 4.4L377.1 8.7L376.1 13.8L374.8 16.5L373.4 20.3ZM370.2 27.0L371.7 26.5L372.1 28.1L370.7 28.7ZM333.8 -11.4L335.7 -3.4L337.7 1.5L339.6 2.3L341.6 -1.6L344.5 -1.6L346.5 -3.9L344.5 -7.8L349.4 -11.4L344.5 -15.9L333.8 -14.2ZM457.4 6.8L458.9 4.4L462.8 5.6L465.3 6.8L469.7 7.9L470.2 9.5L465.8 9.5L462.8 9.1L459.9 9.8L457.9 8.7ZM459.4 14.5L461.4 12.7L463.3 14.1L461.4 15.1ZM497.8 21.5L499.5 20.6L501.4 21.2L500.0 22.7L498.0 22.4ZM461.8 71.5L463.3 70.4L462.8 69.4L462.8 67.5L464.5 67.5L463.6 65.7L463.1 63.4L463.1 61.0L462.6 58.8L462.0 60.1L461.6 62.6L461.8 64.9L462.0 67.2L461.8 69.4L461.8 71.5ZM460.2 77.6L460.9 77.2L461.1 76.3L463.1 77.0L464.3 75.6L465.4 75.2L465.0 74.0L463.8 74.2L462.8 73.6L461.6 72.4L461.6 73.9L461.2 75.2L460.3 75.4L459.7 76.3L460.2 77.6ZM451.0 86.9L451.6 86.2L452.8 85.2L454.0 85.1L455.3 84.9L456.0 84.5L456.7 83.4L457.2 82.7L457.2 83.6L458.4 82.8L459.3 81.7L459.9 80.2L459.9 78.9L460.2 78.0L461.2 77.8L461.4 78.9L461.8 80.2L461.4 81.5L460.9 82.1L460.9 83.3L460.5 84.3L460.7 84.9L460.2 85.5L459.7 85.7L459.6 85.1L459.1 85.5L458.7 86.1L458.1 86.2L457.0 86.2L456.8 86.4L456.3 86.7L455.8 87.5L455.1 87.0L455.2 86.2L454.0 86.1L453.0 86.6L452.1 87.0L451.0 86.9ZM451.0 87.0L451.8 87.5L452.0 88.4L451.5 89.9L450.8 90.3L450.3 89.8L450.5 88.7L449.9 88.3L449.8 87.7L450.5 87.3L451.0 87.0ZM452.6 87.1L453.5 86.7L454.4 86.6L454.7 87.1L454.2 87.7L453.3 87.7L452.9 88.3L452.5 87.9ZM441.3 96.9L442.2 97.0L441.9 98.1L441.5 99.4L441.1 100.2L440.5 99.4L440.5 98.5L441.3 96.9ZM430.1 102.3L431.2 102.2L431.5 102.8L431.0 103.6L430.2 104.2L429.3 103.8L429.3 103.0ZM401.2 112.7L402.0 113.3L402.5 114.0L403.0 115.1L402.7 116.0L401.8 116.5L401.2 116.2L401.0 115.2L401.0 114.2ZM440.9 103.9L441.8 103.8L442.5 104.0L442.6 105.2L442.0 106.4L441.9 107.7L442.8 108.3L443.8 108.7L444.3 109.5L444.1 109.8L443.3 109.3L442.8 108.9L441.8 108.8L440.9 108.7L440.9 107.9L440.3 107.2L440.2 106.2L440.7 105.6L440.7 104.8ZM440.7 109.1L441.6 109.1L441.8 110.0L441.3 110.3ZM444.5 110.0L445.5 110.0L445.9 111.3L445.2 112.3L445.3 111.3L444.6 111.0ZM442.3 110.7L443.3 110.9L443.5 112.0L442.8 112.9L442.8 112.0L442.3 112.0ZM437.6 114.1L438.7 112.9L439.8 111.2L439.6 112.1L438.6 113.5L437.8 114.2ZM442.3 115.4L442.6 114.6L443.6 113.9L444.5 114.2L445.2 113.5L445.7 112.7L446.4 113.5L446.7 114.9L446.4 116.1L445.7 116.8L445.5 115.7L444.4 116.1L444.2 115.1L443.5 114.9L442.8 115.5ZM429.6 120.8L430.2 120.3L430.8 120.6L431.7 120.8L431.9 119.9L433.5 119.2L434.4 118.0L435.4 117.4L436.0 116.8L437.1 115.4L438.1 116.0L439.2 116.9L439.6 117.2L438.6 117.9L438.0 118.2L438.2 119.4L438.6 120.3L439.3 121.2L438.4 121.5L438.0 122.3L437.9 123.1L437.0 123.8L436.9 124.7L436.6 125.8L436.2 125.9L435.2 126.3L434.3 125.6L433.0 125.6L432.2 125.2L430.8 125.1L430.6 123.8L429.9 123.1L429.6 122.0L429.6 120.8ZM416.2 116.8L417.4 117.2L418.4 117.2L419.3 118.4L420.6 119.4L421.4 120.1L422.2 120.5L423.2 121.3L424.0 121.8L424.5 122.6L425.1 123.3L425.3 124.2L426.4 124.9L426.7 125.5L426.5 126.7L426.5 128.0L425.9 128.1L425.3 127.9L424.5 127.2L423.2 126.3L422.2 125.1L421.7 124.3L421.1 123.2L420.1 122.0L419.6 120.6L418.6 119.9L417.8 118.9L416.9 117.9L416.2 116.8ZM425.9 129.0L426.6 128.1L427.5 128.2L428.9 128.6L429.4 129.0L431.0 129.1L431.4 128.6L433.0 129.1L433.5 129.8L435.0 129.9L435.0 130.8L433.5 130.4L431.5 130.4L429.6 129.9L428.4 129.9L427.1 129.6L426.2 129.1ZM435.0 130.2L436.1 130.4L435.6 130.9L436.5 130.5L437.1 130.6L436.9 131.0L437.4 130.5L439.4 130.5L438.9 131.0L437.4 131.2L436.3 131.0ZM440.2 130.5L441.3 130.5L443.2 130.2L443.1 130.7L441.8 131.0L440.3 130.9ZM443.8 132.4L444.7 131.3L445.9 130.7L447.4 130.5L446.7 131.1L445.2 131.9L444.2 132.4ZM439.4 131.6L440.3 131.5L441.1 132.1L440.3 132.4L439.4 131.9ZM440.3 121.1L441.1 121.0L442.3 121.3L443.8 121.4L444.7 121.0L445.4 120.7L445.0 121.6L444.2 121.9L442.8 121.8L441.3 121.8L440.5 122.3L440.3 123.1L441.0 123.6L441.9 123.2L443.3 123.0L443.7 123.3L442.5 123.9L442.0 124.2L442.6 125.2L443.1 126.2L443.5 127.5L442.9 127.7L442.6 126.9L441.9 126.9L441.5 125.7L441.2 124.9L440.6 125.2L440.7 126.7L440.7 127.7L439.9 127.8L439.8 126.7L439.8 125.7L439.3 125.2L439.2 124.8L439.6 123.8L440.1 122.5L440.3 121.1ZM447.7 120.2L448.2 121.1L448.8 120.8L448.4 121.8L448.8 122.0L448.2 123.0L447.9 122.0L447.6 121.3ZM448.2 125.2L449.6 125.0L450.9 125.4L450.1 125.8L448.6 125.7ZM446.2 125.4L447.2 125.3L447.4 125.9L446.4 126.0ZM451.1 123.1L452.6 122.7L454.0 123.1L454.2 124.3L455.0 125.5L456.0 124.9L457.0 124.2L457.9 123.9L459.4 124.4L460.9 124.8L462.8 125.6L464.3 126.1L465.6 127.0L465.8 127.7L467.0 128.1L467.6 128.9L466.7 129.2L467.2 130.1L468.2 131.1L469.2 131.9L470.4 132.4L469.7 132.7L467.7 132.2L466.5 131.4L465.8 130.3L464.3 129.9L463.3 130.3L462.8 131.2L461.4 131.3L459.9 130.3L458.4 130.4L457.9 129.7L458.7 129.0L457.9 127.7L456.5 126.9L455.0 126.6L453.5 126.0L452.8 126.2L452.1 125.1L453.5 124.7L452.4 124.5L451.3 123.8L451.1 123.1ZM468.0 127.7L469.7 127.2L471.1 126.4L471.9 126.5L471.6 127.5L470.2 128.4L468.7 128.4ZM470.4 124.8L471.6 125.4L472.6 126.7L472.3 126.7L471.1 125.5ZM474.2 127.5L475.0 128.2L475.4 129.0L474.8 128.7ZM479.0 131.4L479.9 131.6L480.2 132.0L479.2 131.9ZM483.4 142.4L484.8 143.2L486.3 144.6L485.8 144.8L484.3 143.8ZM496.4 139.6L497.5 139.7L497.5 140.4L496.4 140.3ZM485.9 137.1L486.5 137.3L486.5 137.9L486.0 137.7ZM434.2 144.9L434.7 144.1L435.9 143.3L437.2 142.9L438.6 142.6L439.8 142.3L441.3 141.8L442.5 140.4L442.5 139.4L443.8 139.5L444.0 138.5L444.9 137.4L445.7 136.6L447.0 136.0L448.0 136.6L448.4 137.1L449.6 137.0L449.8 135.8L450.7 134.6L451.6 134.3L452.7 134.2L452.7 133.5L453.5 133.9L455.0 134.3L456.0 134.4L456.9 134.4L456.5 135.3L455.9 135.8L455.4 136.9L456.0 137.7L457.4 138.4L458.4 139.0L459.2 139.7L460.1 139.9L460.8 139.4L461.3 138.1L461.5 136.6L461.4 135.1L461.7 134.1L462.0 133.1L462.4 132.8L462.7 133.6L463.1 134.6L463.4 135.8L464.3 136.4L465.1 137.1L465.3 138.7L465.9 139.7L466.1 141.1L467.2 141.7L468.5 142.6L469.0 143.8L469.7 144.7L470.4 145.7L471.4 146.6L472.4 147.8L472.8 149.2L473.1 150.6L473.2 152.0L472.6 154.0L472.2 155.6L471.4 156.5L470.8 157.7L470.4 158.9L469.9 160.1L469.7 161.7L469.0 162.3L467.7 162.4L466.7 163.1L466.0 163.9L465.3 163.1L464.7 162.4L464.3 162.9L463.3 163.5L462.1 163.0L460.9 162.6L460.1 162.0L459.6 161.0L459.4 160.0L458.5 159.6L458.4 158.6L457.9 158.0L457.8 159.1L457.0 159.1L457.4 157.9L457.8 156.7L457.7 156.0L457.2 157.1L456.5 157.9L455.9 158.8L455.3 158.3L455.2 157.3L454.2 156.4L453.5 155.6L452.3 155.4L451.1 154.8L449.6 154.9L448.2 155.4L446.7 155.7L445.2 156.3L444.2 156.9L443.8 157.6L442.3 157.6L440.8 157.6L439.8 158.2L438.7 158.8L437.9 159.0L436.9 158.9L435.6 158.0L435.5 157.2L436.1 156.9L436.1 155.4L435.6 154.0L435.3 152.5L435.0 151.4L434.6 150.3L434.0 149.2L434.4 148.4L434.0 147.6L434.0 146.5L434.2 144.9ZM464.5 165.9L465.3 166.2L466.2 166.5L467.2 166.2L468.0 166.2L468.0 167.6L467.7 169.0L467.0 169.4L466.2 169.8L465.6 169.2L465.1 168.0L464.6 167.0L464.5 165.9ZM450.4 133.5L451.4 133.4L451.4 133.9L450.5 133.9ZM456.6 159.7L457.7 159.6L457.9 160.0L456.8 160.1ZM491.9 158.2L492.6 158.9L493.4 159.5L493.9 160.7L494.6 160.8L495.0 161.9L496.1 162.5L497.3 162.0L497.4 163.1L496.9 164.0L496.1 164.4L496.0 165.4L495.1 166.7L494.4 167.1L493.8 166.7L494.2 165.4L493.9 164.8L492.9 164.3L493.6 163.5L493.8 162.5L493.9 161.7L493.4 160.7L492.6 159.5L491.9 158.2ZM491.9 165.7L492.6 166.3L493.4 166.7L493.3 167.6L492.4 169.0L492.0 169.8L490.7 170.6L490.3 171.7L489.9 172.9L488.7 173.8L487.6 173.9L486.8 173.4L485.9 172.8L486.6 171.7L487.5 170.6L488.7 169.6L489.7 169.0L490.5 167.9L491.0 167.0L491.4 166.1L491.9 165.7ZM170.5 102.1L171.4 102.5L171.2 103.4L170.5 103.1ZM375.2 109.8L376.3 109.9L376.1 110.2L375.3 110.1ZM361.3 128.0L361.6 128.0L361.6 128.6L361.3 128.6ZM377.1 143.2L377.6 143.2L377.6 143.6L377.1 143.6ZM331.3 118.7L331.8 118.7L331.6 119.2ZM306.5 93.3L307.3 93.1L307.1 93.8L306.6 93.7ZM390.2 177.4L391.7 177.4L391.7 178.3L390.5 178.3ZM285.8 185.3L287.8 185.8L288.0 186.6L286.3 185.8ZM147.0 292.4L147.0 249.5L154.8 250.9L161.7 250.4L166.6 249.5L171.4 248.0L176.3 246.2L178.3 242.3L180.2 238.2L185.1 237.0L190.0 234.4L195.9 233.3L200.8 231.5L205.7 232.2L210.6 232.6L215.4 234.4L220.3 235.5L223.3 231.5L222.8 227.1L226.7 225.2L229.1 227.1L233.0 228.5L237.0 228.8L240.9 230.5L244.8 230.1L248.7 229.8L251.6 228.1L250.2 224.0L249.7 220.4L252.6 216.7L254.6 217.6L256.0 221.0L257.0 216.7L257.2 213.0L259.0 209.8L260.4 206.9L262.4 204.9L265.3 203.1L267.3 202.9L266.8 204.9L264.3 205.8L262.9 207.9L261.9 210.3L259.9 212.3L259.0 215.4L261.4 218.1L262.9 222.5L263.4 227.1L263.4 232.2L260.9 237.8L255.5 243.1L250.6 246.7L248.7 253.4L264.3 258.8L279.0 258.8L287.8 253.4L289.8 246.7L292.7 242.3L295.6 239.8L297.6 236.7L301.5 232.9L304.4 229.5L308.3 227.1L311.3 224.0L313.2 222.5L317.1 221.6L321.0 221.0L323.0 219.0L325.9 219.8L328.9 219.5L331.8 219.2L334.7 219.0L337.7 218.1L340.6 219.0L344.5 220.1L348.4 220.4L352.3 218.1L355.3 216.2L357.2 217.8L360.2 218.7L362.1 216.7L364.1 214.6L367.0 213.5L369.9 212.3L371.9 211.5L374.8 209.1L377.8 209.5L379.7 211.5L382.6 212.8L385.6 213.0L388.5 213.8L390.5 214.1L391.4 216.7L392.9 219.5L394.9 218.7L397.3 217.6L399.3 215.1L401.2 213.8L403.2 212.3L406.1 211.3L409.0 211.0L411.0 211.3L413.9 210.3L416.9 210.0L419.8 209.1L422.7 208.6L425.7 209.8L428.6 210.5L431.0 209.1L433.5 208.6L436.4 210.8L439.4 211.5L442.3 210.5L445.2 210.0L448.2 211.3L451.1 209.3L454.0 209.3L457.0 209.8L459.9 210.8L462.8 211.3L465.8 213.0L468.7 214.8L471.6 215.6L474.6 217.0L477.5 217.6L480.4 220.1L482.9 221.3L485.3 221.3L487.3 222.8L489.7 224.0L489.2 228.1L487.3 230.8L485.3 234.4L483.4 237.8L482.4 243.1L483.4 247.6L486.3 248.5L489.2 248.5L494.1 249.5L499.0 249.5L499.0 292.4ZM510.7 36.5L512.2 29.8L515.6 27.3L517.1 24.2L522.0 21.2L526.4 22.7L530.3 23.9L534.2 25.1L537.1 26.2L541.0 27.9L543.0 26.8L546.9 25.1L549.8 23.9L552.3 26.8L555.7 25.6L559.6 27.9L562.6 30.8L566.5 31.1L568.9 32.6L569.4 29.2L572.3 29.2L575.3 31.1L578.7 31.1L579.7 29.0L581.1 30.0L581.3 25.6L580.8 21.2L582.1 19.1L583.6 21.2L585.0 24.5L586.0 27.3L586.7 29.8L589.0 31.8L589.9 28.4L591.4 25.9L594.3 25.9L595.5 28.4L594.8 31.8L595.5 33.1L593.4 34.8L590.9 35.1L590.9 38.4L589.0 39.7L586.5 41.7L584.1 44.5L582.6 48.5L582.4 50.8L584.1 51.4L584.6 54.1L587.0 54.1L589.4 55.9L591.9 57.1L594.5 57.5L594.6 61.0L595.8 62.7L596.8 63.8L597.8 63.4L598.0 61.3L597.5 58.5L599.2 56.6L600.1 54.1L598.2 51.0L599.2 48.5L598.7 43.9L601.2 43.9L603.1 44.1L605.1 45.9L606.8 46.7L607.0 50.4L609.0 51.8L610.5 50.8L611.8 47.9L612.9 50.4L614.4 53.2L615.1 55.9L617.8 58.0L619.0 59.0L620.2 61.3L620.4 62.6L619.3 63.5L617.3 64.9L615.4 65.4L612.4 65.2L610.0 65.5L609.0 66.9L607.0 68.8L605.6 70.4L606.6 70.1L608.2 67.9L610.0 67.0L612.0 67.2L612.0 68.2L610.7 68.7L611.6 70.0L611.9 71.2L613.4 71.8L614.9 72.1L616.3 70.3L616.4 71.7L615.2 72.6L612.9 73.5L610.8 75.0L610.3 73.9L611.9 72.4L610.5 72.6L609.3 73.3L607.5 74.2L606.3 75.0L605.8 76.2L606.0 77.1L606.6 77.4L605.3 77.6L604.1 78.0L602.6 78.7L602.6 79.9L601.7 81.0L601.4 82.1L600.7 83.3L600.8 84.5L601.2 85.4L600.1 86.1L598.7 87.0L597.6 87.9L596.0 89.1L595.5 90.4L595.4 91.5L596.2 93.3L596.7 95.1L596.5 96.7L595.7 96.8L595.0 95.7L594.1 94.1L594.0 92.8L592.9 91.5L591.4 91.8L590.4 91.1L588.5 91.2L587.6 92.5L586.5 92.4L585.0 92.0L583.1 92.0L581.8 92.8L580.2 94.0L579.8 96.0L579.4 98.1L579.4 99.9L580.0 101.6L580.8 103.1L582.1 103.8L583.1 104.2L584.6 103.8L586.0 103.4L586.5 101.5L587.5 101.0L589.0 100.7L590.0 101.0L589.4 102.5L589.2 104.1L588.7 104.9L588.2 106.5L589.4 106.7L590.9 106.5L592.4 106.7L593.6 107.5L593.4 109.0L593.2 110.9L593.6 112.0L594.5 113.2L595.8 113.7L597.0 113.1L598.0 113.0L599.3 113.8L598.8 115.2L598.4 114.3L597.3 113.6L596.5 114.2L596.3 115.1L595.1 114.7L593.8 114.2L593.2 113.5L591.9 112.5L591.1 111.6L589.9 109.8L589.2 109.2L587.5 109.0L585.5 108.5L583.6 106.9L582.3 106.1L580.6 106.8L578.7 106.1L576.7 105.4L575.3 104.5L573.3 103.5L571.7 102.0L572.0 100.8L571.4 99.2L569.6 97.3L568.1 96.1L567.6 94.9L566.5 93.8L565.2 92.6L564.5 90.6L562.8 89.6L562.8 91.0L564.0 92.8L564.8 94.1L566.0 96.0L567.0 97.6L567.9 99.0L567.2 99.2L565.7 97.6L565.2 96.0L563.3 94.6L562.8 93.2L561.8 91.3L560.9 89.6L560.4 88.4L559.3 87.1L558.4 86.7L557.1 86.2L556.4 84.9L555.7 83.4L555.1 82.3L554.0 81.0L553.5 79.2L553.6 77.2L553.3 75.9L553.8 73.6L553.8 71.2L553.1 68.2L554.7 68.4L555.0 69.7L555.3 68.2L554.6 66.9L553.3 65.7L551.3 64.5L550.1 63.4L549.8 61.3L548.4 59.8L547.6 58.3L546.6 56.4L545.6 54.7L544.2 52.7L542.7 51.4L541.5 51.9L540.1 50.4L538.3 48.9L536.2 48.3L533.7 48.3L531.8 46.7L530.0 46.9L529.8 48.5L528.3 49.9L526.6 50.1L527.1 47.5L528.3 46.1L526.9 46.5L525.9 48.1L524.9 49.9L524.1 51.0L523.0 52.7L521.8 54.1L520.0 55.6L518.1 56.8L516.3 57.6L514.9 58.1L513.9 58.3L515.3 57.3L517.1 56.1L518.6 55.0L520.0 53.8L521.0 51.8L521.3 50.6L520.0 50.8L518.6 51.2L516.8 51.0L516.6 48.9L514.8 48.9L513.5 46.9L512.7 44.9L513.7 42.8L514.6 41.9L517.1 41.3L517.6 39.3L515.8 38.8L514.0 39.1L512.2 37.7L510.7 36.5ZM588.5 13.8L591.9 13.1L595.8 13.4L598.7 16.1L601.7 18.7L605.1 21.5L608.0 24.5L609.2 27.9L612.4 31.1L614.8 33.6L612.9 37.9L611.7 41.5L610.0 42.4L611.2 44.5L609.0 43.0L607.0 43.9L605.1 42.4L603.1 39.5L600.7 39.5L598.7 38.6L599.2 36.7L602.2 36.7L603.1 33.6L603.9 31.1L602.2 29.5L600.2 27.9L598.7 25.1L597.3 25.6L595.3 25.1L592.4 25.1L590.4 23.6L588.5 23.6L587.3 20.6L589.0 21.5L591.9 21.5L591.4 17.5L590.1 14.8L588.5 13.8ZM559.1 20.3L560.1 16.5L563.0 14.8L566.5 16.5L569.4 15.1L571.8 14.8L572.3 19.1L573.0 22.7L576.0 25.6L575.0 28.1L571.8 27.9L568.9 28.7L565.5 29.0L563.5 27.3L561.1 27.0L560.3 25.1L562.6 23.6L559.1 20.3ZM552.3 19.4L553.3 13.1L555.7 10.6L559.6 11.7L562.1 14.5L558.9 18.1L557.2 20.6L554.7 21.8L552.3 19.4ZM580.6 6.8L585.0 1.9L589.0 2.7L592.9 3.2L596.8 6.0L596.5 9.8L590.9 10.6L585.5 9.8L584.6 6.0L580.6 6.8ZM581.5 12.7L585.0 12.0L586.7 13.1L586.8 16.1L584.8 18.1L583.3 19.4L581.6 17.1L581.5 12.7ZM574.8 15.8L577.2 13.1L579.4 13.1L580.2 17.5L578.5 20.9L575.8 19.4L574.8 15.8ZM560.6 6.4L563.5 3.2L568.4 1.9L571.6 5.6L571.4 8.7L568.4 9.5L564.5 10.6L563.0 8.7L560.6 6.4ZM572.8 2.7L577.2 1.9L579.2 2.7L579.5 7.6L576.9 8.7L574.3 6.8L572.8 2.7ZM577.7 27.3L579.7 25.6L581.6 27.9L580.6 29.2L578.2 29.0ZM589.9 37.2L591.4 35.8L592.9 37.2L595.3 39.3L596.5 40.8L593.8 41.7L591.4 41.9L590.4 40.6L591.1 39.5L589.9 37.2ZM581.1 -3.0L581.1 -14.2L616.3 -14.2L613.4 -7.8L604.6 -6.3L600.7 -3.9L598.7 0.6L596.8 4.0L593.8 2.7L589.9 3.2L587.5 2.3L588.0 -1.2L584.1 -2.1L581.1 -3.0ZM554.7 4.0L557.7 -0.3L561.6 -0.7L561.6 2.7L558.6 5.2L554.7 4.0ZM617.0 69.1L618.8 69.2L620.4 70.3L622.2 70.5L623.2 70.7L623.5 69.2L622.7 67.9L622.4 66.6L620.7 65.8L620.5 63.4L619.3 64.1L618.5 66.0L617.5 67.8L617.0 69.1ZM549.6 64.5L551.8 64.9L553.0 66.3L554.2 67.9L553.0 67.8L551.5 66.7L550.0 65.5L549.6 64.5ZM545.0 59.2L546.2 59.3L546.7 62.1L545.4 61.0L545.0 59.2ZM523.9 53.1L525.9 52.3L526.2 53.6L524.6 54.5L523.9 53.1ZM612.1 70.4L614.2 70.8L613.9 71.5L612.4 71.1ZM611.9 65.8L614.4 66.6L614.6 67.0L612.6 66.7ZM602.6 78.8L604.6 78.1L604.1 78.7L602.8 78.9ZM603.6 -5.3L606.1 0.6L608.0 4.0L610.0 4.8L613.4 4.0L616.8 5.6L618.3 8.7L619.8 12.4L620.7 16.5L621.5 20.6L621.7 23.6L624.6 24.5L625.1 27.3L622.7 29.2L622.7 33.1L623.9 36.7L624.8 40.2L626.1 43.4L627.6 46.5L630.0 48.1L632.0 48.7L633.0 47.9L633.4 45.1L634.6 42.4L635.6 39.1L637.8 36.5L639.8 35.8L642.7 32.3L645.7 30.3L649.1 29.0L652.5 25.6L653.5 23.6L652.0 22.1L653.5 19.7L651.5 17.1L653.5 14.1L655.0 10.6L655.9 6.0L655.4 0.6L656.9 -3.9L657.4 -14.2L603.6 -14.2L603.6 -5.3ZM592.0 100.3L593.6 99.3L595.3 99.1L597.3 99.6L599.2 100.5L601.2 101.5L602.4 102.1L601.2 102.4L599.1 102.4L599.2 101.7L598.2 101.3L597.0 100.6L595.3 100.1L594.0 99.6L592.9 100.2L592.0 100.3ZM602.3 103.9L603.4 102.5L604.9 102.5L606.6 102.6L608.0 103.7L607.0 104.1L605.9 104.1L605.0 104.7L603.8 104.2L602.3 103.9ZM598.4 104.0L600.2 104.1L600.4 104.5L598.9 104.6ZM609.3 103.9L610.8 104.0L610.6 104.4L609.4 104.4ZM598.4 96.8L599.0 96.9L599.2 97.9L598.5 97.7ZM614.6 111.8L615.4 111.7L615.4 112.4L614.6 112.4ZM599.3 113.8L599.9 114.5L600.7 113.2L601.2 111.9L601.9 111.4L603.1 111.2L604.4 110.5L605.1 110.1L605.3 110.8L604.7 111.3L605.0 112.1L605.6 113.0L605.2 111.6L606.4 111.0L606.8 110.4L607.7 111.1L608.3 111.9L610.5 111.9L611.9 112.3L613.4 111.8L614.4 111.9L614.9 112.7L615.8 114.0L617.3 114.5L618.3 115.6L619.3 116.4L620.7 116.5L622.2 116.6L623.7 117.4L624.6 118.1L625.3 119.9L626.1 120.6L626.1 121.8L625.1 122.4L625.6 123.3L627.6 123.0L628.1 123.5L630.0 123.5L631.5 124.5L632.5 124.7L634.4 125.1L635.9 125.1L637.4 125.9L638.6 127.0L640.3 127.4L640.8 128.7L641.0 130.1L640.3 131.6L639.3 132.7L638.3 134.1L637.2 135.1L636.9 136.6L636.9 138.7L636.4 140.4L635.6 142.5L634.9 144.1L633.9 145.3L632.5 145.4L631.3 145.7L629.7 146.5L628.3 147.6L627.5 148.6L627.5 150.3L627.1 151.6L625.9 153.4L624.8 154.8L623.9 155.9L622.8 157.5L621.7 158.5L620.2 158.8L618.8 158.3L617.9 157.7L617.9 158.6L619.1 159.5L619.5 160.7L618.7 162.5L617.3 163.4L615.4 163.8L614.2 163.8L614.1 165.7L612.9 166.5L611.4 166.3L611.4 167.9L612.7 168.3L611.6 169.2L611.2 171.0L610.0 172.0L609.0 173.1L610.0 174.5L610.7 175.6L609.5 177.0L608.7 178.6L607.7 179.4L607.3 180.9L608.1 182.5L606.6 182.8L605.6 184.6L604.1 184.5L602.8 183.3L601.7 181.2L601.2 178.6L601.1 175.9L601.2 174.2L602.4 172.7L603.1 170.7L603.6 168.3L602.8 167.0L602.9 164.8L603.3 162.9L603.0 161.5L603.8 159.5L604.7 157.5L605.1 155.4L605.1 153.1L605.3 151.4L605.8 149.7L606.1 147.6L606.2 145.6L606.4 143.3L606.3 140.8L605.3 139.8L604.1 139.1L602.6 138.2L601.5 137.3L600.4 136.1L600.3 135.3L599.5 134.2L598.9 132.8L598.2 131.4L597.6 130.1L596.9 129.1L595.6 128.2L595.5 126.9L596.5 125.6L597.0 124.7L595.9 124.5L596.0 123.3L596.7 122.3L596.8 121.4L597.9 120.9L598.2 119.9L599.2 119.1L599.4 118.2L599.3 116.9L599.3 115.8L598.8 115.2L599.3 113.8ZM607.9 183.1L608.3 184.1L609.5 185.6L611.2 186.5L610.0 187.1L608.0 187.6L606.6 187.5L605.1 186.3L604.6 185.3L606.1 185.3L606.3 183.6L607.0 183.0ZM615.2 181.6L616.8 180.9L618.5 181.4L617.3 182.5L615.6 182.3ZM602.4 167.5L603.1 167.6L603.1 169.5L602.3 169.4ZM522.5 102.1L523.4 102.5L523.2 103.4L522.5 103.1ZM637.8 185.3L639.8 185.8L640.0 186.6L638.3 185.8ZM499.0 292.4L499.0 249.5L506.8 250.9L513.7 250.4L518.6 249.5L523.4 248.0L528.3 246.2L530.3 242.3L532.2 238.2L537.1 237.0L542.0 234.4L547.9 233.3L552.8 231.5L557.7 232.2L562.6 232.6L567.4 234.4L572.3 235.5L575.3 231.5L574.8 227.1L578.7 225.2L581.1 227.1L585.0 228.5L589.0 228.8L592.9 230.5L596.8 230.1L600.7 229.8L603.6 228.1L602.2 224.0L601.7 220.4L604.6 216.7L606.6 217.6L608.0 221.0L609.0 216.7L609.2 213.0L611.0 209.8L612.4 206.9L614.4 204.9L617.3 203.1L619.3 202.9L618.8 204.9L616.3 205.8L614.9 207.9L613.9 210.3L611.9 212.3L611.0 215.4L613.4 218.1L614.9 222.5L615.4 227.1L615.4 232.2L612.9 237.8L607.5 243.1L602.6 246.7L600.7 253.4L616.3 258.8L631.0 258.8L639.8 253.4L641.8 246.7L644.7 242.3L647.6 239.8L649.6 236.7L653.5 232.9L656.4 229.5L660.3 227.1L663.3 224.0L665.2 222.5L669.1 221.6L673.0 221.0L675.0 219.0L677.9 219.8L680.9 219.5L683.8 219.2L686.7 219.0L689.7 218.1L692.6 219.0L696.5 220.1L700.4 220.4L704.3 218.1L707.3 216.2L709.2 217.8L712.2 218.7L714.1 216.7L716.1 214.6L719.0 213.5L721.9 212.3L723.9 211.5L726.8 209.1L729.8 209.5L731.7 211.5L734.6 212.8L737.6 213.0L740.5 213.8L742.5 214.1L743.4 216.7L744.9 219.5L746.9 218.7L749.3 217.6L751.3 215.1L753.2 213.8L755.2 212.3L758.1 211.3L761.0 211.0L763.0 211.3L765.9 210.3L768.9 210.0L771.8 209.1L774.7 208.6L777.7 209.8L780.6 210.5L783.0 209.1L785.5 208.6L788.4 210.8L791.4 211.5L794.3 210.5L797.2 210.0L800.2 211.3L803.1 209.3L806.0 209.3L809.0 209.8L811.9 210.8L814.8 211.3L817.8 213.0L820.7 214.8L823.6 215.6L826.6 217.0L829.5 217.6L832.4 220.1L834.9 221.3L837.3 221.3L839.3 222.8L841.7 224.0L841.2 228.1L839.3 230.8L837.3 234.4L835.4 237.8L834.4 243.1L835.4 247.6L838.3 248.5L841.2 248.5L846.1 249.5L851.0 249.5L851.0 292.4Z" fill="#0f0f0f" stroke="#0f0f0f" stroke-width="0.4" stroke-linejoin="round"/>
<path d="M17.4 72.2L18.9 70.8L20.9 70.3L22.6 70.5L22.8 72.5L21.4 72.6L20.9 73.6L20.2 73.6L20.9 75.0L22.1 75.9L22.5 77.4L23.3 77.9L24.0 78.3L22.8 78.8L22.8 80.1L23.6 81.1L23.7 82.9L22.3 83.6L20.9 83.7L19.9 82.9L18.9 82.4L18.8 81.3L19.2 80.2L20.2 79.2L19.5 78.5L18.9 77.5L18.2 76.6L17.5 75.6L17.2 74.3L16.8 73.3L17.4 72.2ZM2.0 123.1L2.8 122.0L4.0 121.9L4.5 122.6L4.2 123.5L3.8 124.7L2.8 125.0L2.1 124.3ZM-0.4 125.6L0.0 126.7L0.5 128.7L1.3 130.4L0.8 130.8L-0.1 129.0L-0.4 127.2ZM4.2 131.6L4.8 132.6L5.1 134.1L5.4 136.1L4.8 136.4L4.5 134.6L4.2 133.1ZM369.4 72.2L370.9 70.8L372.9 70.3L374.6 70.5L374.8 72.5L373.4 72.6L372.9 73.6L372.2 73.6L372.9 75.0L374.1 75.9L374.5 77.4L375.3 77.9L376.0 78.3L374.8 78.8L374.8 80.1L375.6 81.1L375.7 82.9L374.3 83.6L372.9 83.7L371.9 82.9L370.9 82.4L370.8 81.3L371.2 80.2L372.2 79.2L371.5 78.5L370.9 77.5L370.2 76.6L369.5 75.6L369.2 74.3L368.8 73.3L369.4 72.2ZM354.0 123.1L354.8 122.0L356.0 121.9L356.5 122.6L356.2 123.5L355.8 124.7L354.8 125.0L354.1 124.3ZM351.6 125.6L352.0 126.7L352.5 128.7L353.3 130.4L352.8 130.8L351.9 129.0L351.6 127.2ZM356.2 131.6L356.8 132.6L357.1 134.1L357.4 136.1L356.8 136.4L356.5 134.6L356.2 133.1ZM233.0 70.4L234.5 69.4L236.0 68.5L237.0 67.5L238.6 67.6L239.9 68.8L240.2 70.3L239.4 70.5L237.9 70.8L236.5 70.3L235.0 70.5L234.0 70.4ZM237.1 76.7L237.2 74.3L237.6 72.5L238.7 71.5L239.9 71.8L239.4 72.9L238.7 74.3L238.5 75.9L238.0 77.2L237.4 77.4ZM240.4 71.5L241.8 71.2L243.3 71.5L244.8 72.5L244.8 73.5L243.5 73.2L243.1 75.0L242.4 75.5L241.8 74.6L241.1 74.6L241.6 72.9L240.6 71.9ZM241.5 77.2L242.3 76.8L243.8 76.0L245.8 75.8L245.7 76.2L244.3 77.0L242.8 77.6L241.6 77.6ZM245.0 75.2L245.8 74.4L247.2 74.2L248.4 74.0L248.5 74.8L247.2 75.2L246.0 75.2ZM252.7 111.9L253.4 112.2L253.6 113.1L252.8 113.3L252.5 112.5ZM585.0 70.4L586.5 69.4L588.0 68.5L589.0 67.5L590.6 67.6L591.9 68.8L592.2 70.3L591.4 70.5L589.9 70.8L588.5 70.3L587.0 70.5L586.0 70.4ZM589.1 76.7L589.2 74.3L589.6 72.5L590.7 71.5L591.9 71.8L591.4 72.9L590.7 74.3L590.5 75.9L590.0 77.2L589.4 77.4ZM592.4 71.5L593.8 71.2L595.3 71.5L596.8 72.5L596.8 73.5L595.5 73.2L595.1 75.0L594.4 75.5L593.8 74.6L593.1 74.6L593.6 72.9L592.6 71.9ZM593.5 77.2L594.3 76.8L595.8 76.0L597.8 75.8L597.7 76.2L596.3 77.0L594.8 77.6L593.6 77.6ZM597.0 75.2L597.8 74.4L599.2 74.2L600.4 74.0L600.5 74.8L599.2 75.2L598.0 75.2ZM604.7 111.9L605.4 112.2L605.6 113.1L604.8 113.3L604.5 112.5Z" fill="#3d3d3d"/>
<path d="M-8.5 55.7L-5.5 55.2L-3.0 56.4L-1.4 55.7L-1.9 53.6L-2.2 53.2L-1.6 49.5M-1.8 47.5L0.3 45.5L1.8 42.6L0.3 40.2L0.1 36.7L0.3 31.8L-0.6 27.9L-0.8 25.6M-5.3 36.0L-5.8 31.8L-8.9 27.9L-3.9 27.9L-3.6 25.4L-1.6 24.8L-0.6 25.9L1.1 26.2M-5.9 63.4L-2.6 63.4L0.8 63.7L2.1 62.4M-1.4 55.7L1.3 57.6L3.0 60.3L2.1 62.4L4.2 62.1L5.7 65.1L8.2 65.8L10.1 66.3L9.9 69.0L8.4 70.0M-7.3 68.1L-6.6 68.7L-5.0 68.8L-3.0 68.2L-1.4 72.2L0.0 72.6M-3.0 68.2L-0.6 68.7L0.3 71.0M-6.6 68.7L-8.5 71.2L-8.1 73.2L-6.8 74.0L-4.6 74.7L-2.6 74.2L-1.0 74.7M-6.8 74.0L-7.1 76.6L-6.6 77.9L-5.0 77.6L-3.3 77.4L-1.6 77.0M6.1 84.6L6.9 83.6L8.2 83.6L12.4 83.1L14.8 83.1L14.0 80.3L14.8 79.9L13.6 78.1L11.6 77.6M10.1 75.1L13.0 75.4L16.5 77.1L18.5 77.2M16.5 77.1L15.0 77.9L13.6 78.1M15.0 77.9L16.5 80.2L16.1 81.0M14.8 79.9L16.1 81.0L17.9 80.1L18.8 81.6M12.4 83.1L11.3 86.0L8.9 87.6L6.0 88.4M8.9 87.6L9.3 89.0L7.2 89.8L8.2 91.0L6.2 92.4L5.2 92.2M5.8 88.4L5.7 89.8L5.2 92.1M4.4 90.0L5.1 92.1M5.3 88.0L6.0 87.7L6.7 86.3L6.2 86.2M9.3 89.0L12.1 90.3L14.7 92.4L16.5 92.5L17.6 91.4L17.9 91.5M16.5 92.5L17.4 93.2L18.3 93.2M14.8 83.1L15.5 84.8L16.0 85.7L15.5 86.9L16.2 88.1L17.6 89.5L18.4 91.5M12.8 106.0L14.0 105.0L17.0 105.4L18.9 103.8L21.8 103.4L24.8 102.3L25.4 100.2L25.0 99.5L22.4 99.3L21.5 97.9M21.8 103.4L22.9 105.8M25.0 99.5L25.8 98.0L26.0 96.4M23.7 82.9L25.8 82.1L27.7 82.6L30.8 83.8L30.2 86.9L30.6 89.8L30.5 91.6L32.4 94.6L32.8 95.3L31.2 96.8M30.5 91.6L32.1 92.2L35.8 91.6L38.8 89.4L39.4 87.7L40.6 86.8L41.0 84.0L44.2 83.1M30.8 83.8L32.6 84.8L34.1 84.2L36.0 82.8L37.5 83.3L39.4 82.6L40.9 82.1L41.0 83.6L44.2 83.1M22.3 77.2L23.8 76.6L25.8 77.9L26.7 77.9L28.3 76.0L29.7 76.7L31.5 78.1L33.6 80.8L36.0 82.8M25.8 77.9L25.8 72.9L28.3 72.1L30.6 73.7L34.5 74.7L35.6 75.6L35.5 77.0L37.5 78.1L38.5 77.8L40.3 76.7L42.9 75.6L43.6 75.4L49.4 76.7M49.4 76.7L46.1 78.4L43.2 79.8L44.2 83.1M40.3 76.7L40.4 79.3L43.2 79.8M37.5 83.3L37.3 80.2L39.9 79.3L40.4 79.3M18.4 70.7L16.7 68.1L17.0 65.4L18.7 65.7L20.9 63.2L24.3 64.1L28.3 64.1L31.1 64.5L29.7 62.6L30.6 59.5L34.8 58.7L38.5 57.1L40.4 59.0L42.9 59.3L46.1 58.8L49.2 64.5L52.6 64.1L56.4 66.9M56.4 66.9L54.8 69.5L52.2 69.8L51.7 72.5L50.0 72.9L49.4 76.7M56.4 66.9L61.0 64.5L66.8 65.7L67.7 62.4L70.9 63.7L75.6 65.7L79.5 66.6L85.1 66.0M56.4 66.9L60.0 72.6L64.4 74.0L65.8 75.9L70.2 76.3L73.7 77.5L78.6 76.0L80.5 74.6L80.5 72.9L84.4 71.1L88.1 70.5L86.2 69.1L84.4 68.8L85.1 66.0M85.1 66.0L87.6 65.2L89.1 60.5L91.8 60.1L94.2 61.3L95.8 65.4L98.6 67.3L99.1 69.1L102.7 68.1L101.1 72.8L99.4 73.1L99.3 75.0L98.7 76.4L96.4 77.1L95.1 77.4L92.5 79.6M94.3 82.3L96.4 81.3M44.2 83.1L47.3 85.1L48.2 86.6L48.0 88.7L48.1 90.2L50.2 91.3L53.1 92.8L55.1 93.8L57.1 93.9L57.9 94.5L58.7 93.5L60.6 94.0L62.9 92.3L64.9 92.2L66.2 93.4M50.2 91.3L49.3 92.9L52.2 94.4L54.9 95.3L57.1 95.5L57.1 93.9M57.9 94.5L58.8 95.2L61.0 95.1L60.6 94.0M37.7 98.4L40.4 97.7L39.4 94.9L41.3 93.8L43.3 91.5L43.9 90.3L43.8 88.3L43.4 86.9L43.4 86.1L47.1 85.1M58.0 100.5L57.8 97.8L57.1 97.6L57.4 95.5L58.8 96.0L58.8 96.7L61.3 97.0L60.2 98.3L60.6 99.2L61.2 98.4L61.5 100.3L61.2 101.6M66.2 93.4L64.1 95.3L63.5 96.8L62.2 98.1L62.3 100.2L61.5 100.3M76.6 100.8L75.1 99.7L74.0 98.9L70.9 99.8L70.0 101.1L68.0 100.1L67.5 98.1L66.4 97.3L67.5 94.2L66.2 93.4M70.9 99.8L72.7 101.9L73.9 103.8L76.1 106.2L76.1 107.8L76.1 110.2L74.6 110.8L73.2 112.1M70.0 101.1L68.9 102.0L70.0 102.9L69.8 104.7L70.8 104.2L72.7 104.1L73.5 105.9L74.2 108.1L76.1 107.8M74.2 108.1L71.7 108.3L71.1 108.9L71.6 110.8M68.9 102.0L66.8 102.6L66.2 103.9L67.5 106.1L67.0 107.5L68.0 109.5L68.3 110.9L67.4 112.5M68.9 115.9L69.9 116.7L70.8 116.2M78.2 120.3L79.0 121.4L80.5 120.9L82.3 120.9L83.4 119.7L84.2 118.1L85.9 118.2M108.9 124.8L108.9 131.2M92.3 131.5L93.2 131.3L93.4 131.7M-4.6 100.2L7.1 100.2M-5.5 102.9L-5.5 106.8L-6.6 107.0L-7.5 109.8L-6.6 111.5L-5.9 113.7L-5.0 113.8L-3.1 113.0L-1.6 113.1L-0.2 112.5L1.3 112.7L3.0 110.5L3.5 110.3L4.1 113.0L4.3 113.9M4.3 113.9L4.7 111.7L5.9 109.9L6.7 108.2L7.2 105.4L8.6 104.4M6.7 108.2L8.1 107.6L10.1 108.1L12.5 110.0L11.9 111.5L13.0 111.5M13.0 111.5L13.0 113.0L14.0 113.5L17.0 114.5L17.9 114.5L15.0 117.4L12.1 118.2L11.1 118.5L9.6 119.0L8.2 118.8L6.2 118.0L5.2 117.0L3.3 114.6L4.3 113.9M11.1 118.5L11.1 123.1L11.7 124.0M9.3 126.9L7.8 125.2L4.2 123.3L4.2 122.1L5.2 120.5L4.2 118.2L5.2 117.0M1.1 118.9L4.2 118.2M1.1 118.9L1.3 120.1L-0.1 121.8L-0.1 123.7L0.8 123.3L4.2 123.3M-0.1 123.7L-0.6 124.9L-0.4 126.6M0.8 123.3L1.1 124.6L0.7 125.0L1.0 125.6L-0.4 126.6M-0.6 124.9L0.7 125.0M1.1 130.4L3.2 131.5L4.2 131.6M4.8 133.7L7.7 133.8L10.5 132.6M3.2 131.5L3.6 133.1L3.0 135.7L3.6 136.6L4.7 136.6L6.0 138.2L5.4 139.3L4.8 136.6M0.5 137.1L3.3 136.1L3.6 136.6M0.5 137.1L0.7 137.7L3.2 138.9L3.1 141.7L1.6 144.8L2.3 147.0L2.2 148.6L3.2 149.6M1.6 144.8L-0.3 144.6L-2.6 146.2L-4.0 148.2L-6.5 147.9L-8.8 149.6L-9.4 147.3L-9.4 151.3L-12.0 151.6L-12.9 151.5M-9.4 147.3L-9.4 144.4L-8.5 144.4L-8.5 140.5L-6.1 139.8L-4.3 140.0L-2.1 142.8L-0.3 144.6M-4.3 140.0L-2.6 140.1L-0.7 138.2L0.7 137.7M-5.5 133.1L-4.3 133.6L-2.1 134.4L-0.6 135.5L0.1 134.3L-1.2 133.9L-1.0 131.4L1.1 130.4M-2.3 152.6L-1.1 151.6L-0.3 152.7L-1.6 153.8L-2.3 152.6M1.3 148.6L2.3 148.6L2.3 150.0L1.3 150.0L1.3 148.6M-17.0 128.1L-16.3 126.8L-14.9 127.0L-13.2 124.5L-11.6 122.8L-11.4 119.9L-10.8 118.9L-10.8 118.1L-7.0 118.3L-4.6 117.2L-2.2 117.3L1.1 118.9M185.1 26.2L185.1 47.9L187.1 48.5L188.6 50.6L190.5 48.9L192.5 51.6L194.1 54.9L195.9 55.9L195.7 58.1M202.5 67.2L229.9 67.2L230.5 67.6L233.0 68.2L235.5 68.7M240.2 70.8L241.4 71.4L242.3 72.5L242.4 75.6L241.7 76.7L242.8 77.1L245.8 75.9L245.7 75.1L248.2 74.2L250.0 72.9L253.1 72.9L254.3 71.7L254.6 70.7L255.3 69.5L256.5 69.7L256.7 71.8L257.1 72.6L257.5 73.1M208.5 88.7L210.8 88.6L214.5 90.0L217.2 90.0L217.2 89.5L218.9 89.5L220.8 92.0L222.1 92.6L222.9 91.8L223.9 91.8L225.7 94.3L226.2 95.5L228.0 96.1M232.8 108.0L233.2 106.4L234.6 106.3L234.0 105.1L234.0 104.6L235.9 104.6L236.7 103.9M235.9 104.6L235.8 106.5L236.7 106.8M235.8 108.1L236.6 107.0M234.9 108.7L235.7 108.1L237.0 108.6L237.2 109.2M237.6 109.5L238.9 108.6L240.0 107.7L241.6 107.5M239.2 111.4L241.2 111.6M241.9 114.4L242.2 112.9M253.3 110.7L252.1 111.5L251.6 113.2L252.2 114.2L252.6 115.4L254.6 115.4L255.1 116.3L257.0 116.2L256.7 117.9L257.2 119.0L256.7 119.6L257.6 121.1M264.3 114.0L263.1 116.4L263.6 117.2L261.6 118.4L259.9 118.3L260.4 119.9L259.0 121.5L257.6 121.1L254.8 120.6L255.1 121.3L254.6 122.5L255.1 123.6L254.7 126.4M263.6 117.2L264.5 118.0L264.3 120.3L265.5 121.0L267.3 120.4L267.8 120.4L269.7 120.1L271.5 120.1L272.4 118.3M267.1 116.5L267.0 117.1L266.3 118.4L267.3 120.4M270.2 116.6L269.7 120.1M254.7 126.4L253.9 126.0L254.5 124.9L251.7 124.6L249.9 122.5L249.4 122.4L247.2 121.9L246.0 120.9M249.4 122.4L249.1 123.9L248.1 124.8L246.5 125.6L246.0 126.8L245.2 126.7L244.4 126.6L244.6 125.6M254.7 126.4L251.7 127.4L250.9 129.1L251.4 129.6L250.6 129.7L251.7 131.5L252.4 132.1L254.0 131.6L254.0 133.1L255.0 133.1M255.0 133.1L255.8 134.7L255.2 136.9L255.5 138.4L255.0 139.7L254.2 140.5M255.0 133.1L256.0 133.1L257.9 132.0L259.2 131.9L259.1 133.8L260.0 134.6L261.6 135.1L263.8 135.9L264.1 138.5L266.0 138.5L265.9 139.4L266.8 140.2L266.5 141.2L266.1 142.5M266.1 142.5L265.2 141.5L262.7 141.8L261.7 144.6L260.1 145.2L259.2 144.5L258.2 144.1L257.3 145.2L256.3 143.8L256.0 141.7L255.0 139.7M257.3 145.2L256.2 147.0L256.0 149.7L254.8 152.0L254.3 154.8L254.6 157.1L254.1 159.5L253.4 162.5L252.8 165.7L252.8 169.0L252.9 171.7L252.6 174.5L251.6 178.2L252.3 180.1L252.6 182.0L255.5 182.3L256.1 182.7M255.9 183.1L255.9 186.8M266.1 142.5L266.4 144.5L268.4 144.7L268.7 146.5L269.9 146.6L269.6 148.2M261.7 144.6L263.4 146.3L265.5 147.3L266.7 148.0L265.7 150.0L267.8 150.2L269.6 148.2L270.4 150.0L268.4 151.2L266.7 153.3L268.3 154.1L270.5 155.9L270.8 157.3M266.7 153.3L266.1 155.9L265.9 157.7M314.3 77.1L315.0 76.8L316.5 77.1L316.9 77.5L316.3 78.3L316.2 79.9L315.7 80.1L316.2 81.8L315.8 83.1M321.2 75.1L323.7 75.9L326.1 76.4M330.3 74.6L329.8 72.9L329.8 71.7L329.0 71.2L329.0 71.0L329.8 69.4L330.4 69.2L331.0 67.2L329.3 66.4L328.7 66.4L327.1 65.7L325.4 64.0M326.3 63.5L328.9 63.8L328.9 64.5L329.3 66.4M328.9 64.5L328.9 62.9L329.8 62.3L330.0 60.5M331.4 57.8L332.7 58.0M336.9 59.5L337.3 61.8L337.7 64.1L335.0 65.2L336.5 67.5L335.7 69.4L332.4 69.4L330.4 69.2M329.8 71.7L331.3 71.1L333.2 70.7L334.9 70.1L336.4 70.8L336.4 71.9M332.4 69.4L333.2 70.7M336.5 67.5L337.7 67.2L339.6 67.6L339.6 68.7L338.7 70.3L336.4 70.8M337.7 64.1L339.1 65.2L341.4 66.4L345.0 67.0M339.6 67.6L341.4 66.4M339.6 68.7L341.4 69.0L343.0 67.9L344.7 68.1M345.0 67.0L346.5 64.9L346.1 63.4L346.0 61.8L346.4 59.5L346.0 59.3M342.2 58.7L345.3 58.7L346.0 59.3L348.1 58.8L349.0 56.4M343.5 55.7L346.5 55.2L349.0 56.4L350.6 55.7L350.1 53.6L349.8 53.2L350.4 49.5M346.9 52.5L349.8 53.2M343.5 57.1L345.3 57.6M350.2 47.5L352.3 45.5L353.8 42.6L352.3 40.2L352.1 36.7L352.3 31.8L351.4 27.9L351.2 25.6M346.7 36.0L346.2 31.8L343.1 27.9L348.1 27.9L348.4 25.4L350.4 24.8L351.4 25.9L353.1 26.2M343.1 27.9L340.6 29.2L338.6 33.1L337.2 35.5L336.4 39.1L334.9 41.3L334.9 45.5L335.2 48.1L334.2 50.4M346.1 63.4L349.4 63.4L352.8 63.7L354.1 62.4M350.6 55.7L353.3 57.6L355.0 60.3L354.1 62.4L356.2 62.1L357.7 65.1L360.2 65.8L362.1 66.3L361.9 69.0L360.4 70.0M344.7 68.1L345.4 68.7L347.0 68.8L349.0 68.2L350.6 72.2L352.0 72.6M345.0 67.0L344.7 68.1M349.0 68.2L351.4 68.7L352.3 71.0M345.4 68.7L343.5 71.2L343.9 73.2L345.2 74.0L347.4 74.7L349.4 74.2L351.0 74.7M338.7 70.3L341.4 71.7L343.5 71.2M345.2 74.0L344.9 76.6L345.4 77.9L347.0 77.6L348.7 77.4L350.4 77.0M348.7 77.4L348.4 78.5M342.6 79.9L343.5 78.5L345.4 77.9M336.4 72.2L338.0 72.2L339.1 70.8M341.4 71.7L341.6 73.1L338.6 72.6L340.2 75.6M341.6 73.1L342.0 75.0L341.1 76.3M342.0 75.0L342.9 75.9L342.0 77.1M342.9 75.9L344.9 76.6M342.0 77.1L343.1 78.3L343.5 78.5M315.8 57.6L315.0 58.5L316.8 59.2M358.1 84.6L358.9 83.6L360.2 83.6L364.4 83.1L366.8 83.1L366.0 80.3L366.8 79.9L365.6 78.1L363.6 77.6M362.1 75.1L365.0 75.4L368.5 77.1L370.5 77.2M368.5 77.1L367.0 77.9L365.6 78.1M367.0 77.9L368.5 80.2L368.1 81.0M366.8 79.9L368.1 81.0L369.9 80.1L370.8 81.6M364.4 83.1L363.3 86.0L360.9 87.6L358.0 88.4M360.9 87.6L361.3 89.0L359.2 89.8L360.2 91.0L358.2 92.4L357.2 92.2M357.8 88.4L357.7 89.8L357.2 92.1M356.4 90.0L357.1 92.1M357.3 88.0L358.0 87.7L358.7 86.3L358.2 86.2M361.3 89.0L364.1 90.3L366.7 92.4L368.5 92.5L369.6 91.4L369.9 91.5M368.5 92.5L369.4 93.2L370.3 93.2M366.8 83.1L367.5 84.8L368.0 85.7L367.5 86.9L368.2 88.1L369.6 89.5L370.4 91.5M364.8 106.0L366.0 105.0L369.0 105.4L370.9 103.8L373.8 103.4L376.8 102.3L377.4 100.2L377.0 99.5L374.4 99.3L373.5 97.9M373.8 103.4L374.9 105.8M377.0 99.5L377.8 98.0L378.0 96.4M375.7 82.9L377.8 82.1L379.7 82.6L382.8 83.8L382.2 86.9L382.6 89.8L382.5 91.6L384.4 94.6L384.8 95.3L383.2 96.8M382.5 91.6L384.1 92.2L387.8 91.6L390.8 89.4L391.4 87.7L392.6 86.8L393.0 84.0L396.2 83.1M382.8 83.8L384.6 84.8L386.1 84.2L388.0 82.8L389.5 83.3L391.4 82.6L392.9 82.1L393.0 83.6L396.2 83.1M374.3 77.2L375.8 76.6L377.8 77.9L378.7 77.9L380.3 76.0L381.7 76.7L383.5 78.1L385.6 80.8L388.0 82.8M377.8 77.9L377.8 72.9L380.3 72.1L382.6 73.7L386.5 74.7L387.6 75.6L387.5 77.0L389.5 78.1L390.5 77.8L392.3 76.7L394.9 75.6L395.6 75.4L401.4 76.7M401.4 76.7L398.1 78.4L395.2 79.8L396.2 83.1M392.3 76.7L392.4 79.3L395.2 79.8M389.5 83.3L389.3 80.2L391.9 79.3L392.4 79.3M370.4 70.7L368.7 68.1L369.0 65.4L370.7 65.7L372.9 63.2L376.3 64.1L380.3 64.1L383.1 64.5L381.7 62.6L382.6 59.5L386.8 58.7L390.5 57.1L392.4 59.0L394.9 59.3L398.1 58.8L401.2 64.5L404.6 64.1L408.4 66.9M408.4 66.9L406.8 69.5L404.2 69.8L403.7 72.5L402.0 72.9L401.4 76.7M408.4 66.9L413.0 64.5L418.8 65.7L419.7 62.4L422.9 63.7L427.6 65.7L431.5 66.6L437.1 66.0M408.4 66.9L412.0 72.6L416.4 74.0L417.8 75.9L422.2 76.3L425.7 77.5L430.6 76.0L432.5 74.6L432.5 72.9L436.4 71.1L440.1 70.5L438.2 69.1L436.4 68.8L437.1 66.0M437.1 66.0L439.6 65.2L441.1 60.5L443.8 60.1L446.2 61.3L447.8 65.4L450.6 67.3L451.1 69.1L454.7 68.1L453.1 72.8L451.4 73.1L451.3 75.0L450.7 76.4L448.4 77.1L447.1 77.4L444.5 79.6M446.3 82.3L448.4 81.3M396.2 83.1L399.3 85.1L400.2 86.6L400.0 88.7L400.1 90.2L402.2 91.3L405.1 92.8L407.1 93.8L409.1 93.9L409.9 94.5L410.7 93.5L412.6 94.0L414.9 92.3L416.9 92.2L418.2 93.4M402.2 91.3L401.3 92.9L404.2 94.4L406.9 95.3L409.1 95.5L409.1 93.9M409.9 94.5L410.8 95.2L413.0 95.1L412.6 94.0M389.7 98.4L392.4 97.7L391.4 94.9L393.3 93.8L395.3 91.5L395.9 90.3L395.8 88.3L395.4 86.9L395.4 86.1L399.1 85.1M410.0 100.5L409.8 97.8L409.1 97.6L409.4 95.5L410.8 96.0L410.8 96.7L413.3 97.0L412.2 98.3L412.6 99.2L413.2 98.4L413.5 100.3L413.2 101.6M418.2 93.4L416.1 95.3L415.5 96.8L414.2 98.1L414.3 100.2L413.5 100.3M428.6 100.8L427.1 99.7L426.0 98.9L422.9 99.8L422.0 101.1L420.0 100.1L419.5 98.1L418.4 97.3L419.5 94.2L418.2 93.4M422.9 99.8L424.7 101.9L425.9 103.8L428.1 106.2L428.1 107.8L428.1 110.2L426.6 110.8L425.2 112.1M422.0 101.1L420.9 102.0L422.0 102.9L421.8 104.7L422.8 104.2L424.7 104.1L425.5 105.9L426.2 108.1L428.1 107.8M426.2 108.1L423.7 108.3L423.1 108.9L423.6 110.8M420.9 102.0L418.8 102.6L418.2 103.9L419.5 106.1L419.0 107.5L420.0 109.5L420.3 110.9L419.4 112.5M420.9 115.9L421.9 116.7L422.8 116.2M430.2 120.3L431.0 121.4L432.5 120.9L434.3 120.9L435.4 119.7L436.2 118.1L437.9 118.2M460.9 124.8L460.9 131.2M444.3 131.5L445.2 131.3L445.4 131.7M320.8 85.6L321.3 87.7L321.8 89.0L319.5 89.6L319.4 90.5L317.6 91.6L314.5 93.0L314.5 94.5M314.5 94.1L310.1 94.1M314.5 94.5L314.5 96.0L311.3 96.0L311.3 98.6L310.3 99.2L310.3 101.0L306.4 101.0M314.5 94.5L318.3 97.0L324.2 101.2L326.1 102.6L327.1 103.3M316.6 97.0L317.6 105.9L317.5 107.0L313.9 107.0L311.8 106.9L311.1 107.7L309.0 105.8L306.9 106.4M314.5 94.5L316.6 97.0M331.4 83.4L331.0 86.2L330.3 87.1L331.8 89.2L332.3 91.2L333.1 89.6L334.2 88.8L334.2 87.9M332.3 91.2L332.7 94.9L332.2 95.7L332.8 97.6L334.7 98.6L330.3 101.4L328.7 102.9L327.1 103.3M347.4 89.6L347.4 100.2L347.4 102.3L346.5 102.3L346.5 102.9L338.6 98.6L337.7 99.2L336.9 99.6L334.7 98.6M347.4 100.2L359.1 100.2M346.5 102.9L346.5 106.8L345.4 107.0L344.5 109.8L345.4 111.5L346.1 113.7L347.0 113.8L348.9 113.0L350.4 113.1L351.8 112.5L353.3 112.7L355.0 110.5L355.5 110.3L356.1 113.0L356.3 113.9M356.3 113.9L356.7 111.7L357.9 109.9L358.7 108.2L359.2 105.4L360.6 104.4M358.7 108.2L360.1 107.6L362.1 108.1L364.5 110.0L363.9 111.5L365.0 111.5M365.0 111.5L365.0 113.0L366.0 113.5L369.0 114.5L369.9 114.5L367.0 117.4L364.1 118.2L363.1 118.5L361.6 119.0L360.2 118.8L358.2 118.0L357.2 117.0L355.3 114.6L356.3 113.9M363.1 118.5L363.1 123.1L363.7 124.0M361.3 126.9L359.8 125.2L356.2 123.3L356.2 122.1L357.2 120.5L356.2 118.2L357.2 117.0M353.1 118.9L356.2 118.2M353.1 118.9L353.3 120.1L351.9 121.8L351.9 123.7L352.8 123.3L356.2 123.3M351.9 123.7L351.4 124.9L351.6 126.6M352.8 123.3L353.1 124.6L352.7 125.0L353.0 125.6L351.6 126.6M351.4 124.9L352.7 125.0M353.1 130.4L355.2 131.5L356.2 131.6M356.8 133.7L359.7 133.8L362.5 132.6M355.2 131.5L355.6 133.1L355.0 135.7L355.6 136.6L356.7 136.6L358.0 138.2L357.4 139.3L356.8 136.6M352.5 137.1L355.3 136.1L355.6 136.6M352.5 137.1L352.7 137.7L355.2 138.9L355.1 141.7L353.6 144.8L354.3 147.0L354.2 148.6L355.2 149.6M353.6 144.8L351.7 144.6L349.4 146.2L348.0 148.2L345.5 147.9L343.2 149.6L342.6 147.3L342.6 151.3L340.0 151.6L339.1 151.5M342.6 147.3L342.6 144.4L343.5 144.4L343.5 140.5L345.9 139.8L347.7 140.0L349.9 142.8L351.7 144.6M347.7 140.0L349.4 140.1L351.3 138.2L352.7 137.7M334.5 139.5L336.7 139.6L341.1 139.6L343.5 140.2L345.9 139.8L344.5 138.4L344.5 135.1L346.5 135.1L346.5 133.1L344.5 133.1L344.3 129.5L342.1 129.7L340.2 130.2L339.2 128.1L335.7 128.1L335.0 128.2M346.5 133.1L347.7 133.6L349.9 134.4L351.4 135.5L352.1 134.3L350.8 133.9L351.0 131.4L353.1 130.4M349.7 152.6L350.9 151.6L351.7 152.7L350.4 153.8L349.7 152.6M353.3 148.6L354.3 148.6L354.3 150.0L353.3 150.0L353.3 148.6M335.0 128.1L335.7 126.8L337.1 127.0L338.8 124.5L340.4 122.8L340.6 119.9L341.2 118.9L341.2 118.1L345.0 118.3L347.4 117.2L349.8 117.3L353.1 118.9M349.8 117.3L347.4 114.9L346.1 113.7M345.4 111.6L343.5 113.0L341.5 113.7L339.1 114.7L338.2 114.9L337.2 116.9L338.6 120.1L341.2 118.9M338.6 120.1L336.0 120.1L332.6 120.1M336.0 120.1L337.2 121.4L337.1 124.2L334.5 125.2L334.0 126.1M332.6 121.3L334.0 121.3L334.0 120.1M331.4 117.6L332.8 115.4L334.7 114.5L336.5 111.5L336.9 110.1L336.7 109.4M338.2 114.9L337.7 112.5L336.9 110.1M336.7 109.4L336.3 108.8L338.2 105.5L338.6 101.9L337.7 99.2M336.7 109.4L332.8 109.2L329.8 109.5L326.9 109.0L326.5 110.8L325.6 116.0M324.6 116.2L323.8 112.0L323.9 111.5M324.2 116.3L323.0 111.4M320.0 117.3L320.4 113.0L320.3 111.5M317.6 112.1L317.8 110.7L319.1 109.1L322.0 107.5L323.2 107.5L325.2 110.1L323.9 111.5L320.3 111.5L317.6 112.1M325.2 110.1L326.5 110.8M327.1 103.3L327.1 105.6L326.4 107.0L323.2 107.5M311.1 107.7L311.9 110.1L314.5 110.1L315.2 112.3L317.6 112.1M306.7 110.1L309.6 109.9L311.9 110.1M308.3 111.6L309.6 110.8L309.6 109.9M310.1 113.5L312.5 112.5L312.9 114.0L311.8 115.5M315.7 118.0L314.7 114.8L315.2 112.3M312.9 114.0L314.7 114.8M306.6 108.9L309.3 108.7L309.3 109.3L306.6 109.4M537.1 26.2L537.1 47.9L539.1 48.5L540.6 50.6L542.5 48.9L544.5 51.6L546.1 54.9L547.9 55.9L547.7 58.1M554.5 67.2L581.9 67.2L582.5 67.6L585.0 68.2L587.5 68.7M592.2 70.8L593.4 71.4L594.3 72.5L594.4 75.6L593.7 76.7L594.8 77.1L597.8 75.9L597.7 75.1L600.2 74.2L602.0 72.9L605.1 72.9L606.3 71.7L606.6 70.7L607.3 69.5L608.5 69.7L608.7 71.8L609.1 72.6L609.5 73.1M560.5 88.7L562.8 88.6L566.5 90.0L569.2 90.0L569.2 89.5L570.9 89.5L572.8 92.0L574.1 92.6L574.9 91.8L575.9 91.8L577.7 94.3L578.2 95.5L580.0 96.1M584.8 108.0L585.2 106.4L586.6 106.3L586.0 105.1L586.0 104.6L587.9 104.6L588.7 103.9M587.9 104.6L587.8 106.5L588.7 106.8M587.8 108.1L588.6 107.0M586.9 108.7L587.7 108.1L589.0 108.6L589.2 109.2M589.6 109.5L590.9 108.6L592.0 107.7L593.6 107.5M591.2 111.4L593.2 111.6M593.9 114.4L594.2 112.9M605.3 110.7L604.1 111.5L603.6 113.2L604.2 114.2L604.6 115.4L606.6 115.4L607.1 116.3L609.0 116.2L608.7 117.9L609.2 119.0L608.7 119.6L609.6 121.1M616.3 114.0L615.1 116.4L615.6 117.2L613.6 118.4L611.9 118.3L612.4 119.9L611.0 121.5L609.6 121.1L606.8 120.6L607.1 121.3L606.6 122.5L607.1 123.6L606.7 126.4M615.6 117.2L616.5 118.0L616.3 120.3L617.5 121.0L619.3 120.4L619.8 120.4L621.7 120.1L623.5 120.1L624.4 118.3M619.1 116.5L619.0 117.1L618.3 118.4L619.3 120.4M622.2 116.6L621.7 120.1M606.7 126.4L605.9 126.0L606.5 124.9L603.7 124.6L601.9 122.5L601.4 122.4L599.2 121.9L598.0 120.9M601.4 122.4L601.1 123.9L600.1 124.8L598.5 125.6L598.0 126.8L597.2 126.7L596.4 126.6L596.6 125.6M606.7 126.4L603.7 127.4L602.9 129.1L603.4 129.6L602.6 129.7L603.7 131.5L604.4 132.1L606.0 131.6L606.0 133.1L607.0 133.1M607.0 133.1L607.8 134.7L607.2 136.9L607.5 138.4L607.0 139.7L606.2 140.5M607.0 133.1L608.0 133.1L609.9 132.0L611.2 131.9L611.1 133.8L612.0 134.6L613.6 135.1L615.8 135.9L616.1 138.5L618.0 138.5L617.9 139.4L618.8 140.2L618.5 141.2L618.1 142.5M618.1 142.5L617.2 141.5L614.7 141.8L613.7 144.6L612.1 145.2L611.2 144.5L610.2 144.1L609.3 145.2L608.3 143.8L608.0 141.7L607.0 139.7M609.3 145.2L608.2 147.0L608.0 149.7L606.8 152.0L606.3 154.8L606.6 157.1L606.1 159.5L605.4 162.5L604.8 165.7L604.8 169.0L604.9 171.7L604.6 174.5L603.6 178.2L604.3 180.1L604.6 182.0L607.5 182.3L608.1 182.7M607.9 183.1L607.9 186.8M618.1 142.5L618.4 144.5L620.4 144.7L620.7 146.5L621.9 146.6L621.6 148.2M613.7 144.6L615.4 146.3L617.5 147.3L618.7 148.0L617.7 150.0L619.8 150.2L621.6 148.2L622.4 150.0L620.4 151.2L618.7 153.3L620.3 154.1L622.5 155.9L622.8 157.3M618.7 153.3L618.1 155.9L617.9 157.7" fill="none" stroke="#4a4a4a" stroke-width="0.7" stroke-linejoin="round"/>
<path d="M499.0 0V246.8" stroke="#363636" stroke-width="0.8"/>
<text x="49.8" y="68.1" textLength="17.1" lengthAdjust="spacing" font-family="Liberation Sans, sans-serif" font-size="6.5" font-weight="700" fill="#858585" stroke="#0f0f0f" stroke-width="0.3" paint-order="stroke">ASIA</text>
<text x="202.8" y="64.4" textLength="26.7" lengthAdjust="spacing" font-family="Liberation Sans, sans-serif" font-size="6.5" font-weight="700" fill="#858585" stroke="#0f0f0f" stroke-width="0.3" paint-order="stroke">NORTH</text>
<text x="198.9" y="72.7" textLength="34.6" lengthAdjust="spacing" font-family="Liberation Sans, sans-serif" font-size="6.5" font-weight="700" fill="#858585" stroke="#0f0f0f" stroke-width="0.3" paint-order="stroke">AMERICA</text>
<text x="87.9" y="144.4" textLength="35.1" lengthAdjust="spacing" font-family="Liberation Sans, sans-serif" font-size="6.5" font-weight="700" fill="#858585" stroke="#0f0f0f" stroke-width="0.3" paint-order="stroke">OCEANIA</text>
<text x="251.0" y="143.2" textLength="26.0" lengthAdjust="spacing" font-family="Liberation Sans, sans-serif" font-size="6.5" font-weight="700" fill="#858585" stroke="#0f0f0f" stroke-width="0.3" paint-order="stroke">SOUTH</text>
<text x="246.4" y="151.5" textLength="34.9" lengthAdjust="spacing" font-family="Liberation Sans, sans-serif" font-size="6.5" font-weight="700" fill="#858585" stroke="#0f0f0f" stroke-width="0.3" paint-order="stroke">AMERICA</text>
<text x="401.8" y="68.1" textLength="17.1" lengthAdjust="spacing" font-family="Liberation Sans, sans-serif" font-size="6.5" font-weight="700" fill="#858585" stroke="#0f0f0f" stroke-width="0.3" paint-order="stroke">ASIA</text>
<text x="554.8" y="64.4" textLength="26.7" lengthAdjust="spacing" font-family="Liberation Sans, sans-serif" font-size="6.5" font-weight="700" fill="#858585" stroke="#0f0f0f" stroke-width="0.3" paint-order="stroke">NORTH</text>
<text x="550.9" y="72.7" textLength="34.6" lengthAdjust="spacing" font-family="Liberation Sans, sans-serif" font-size="6.5" font-weight="700" fill="#858585" stroke="#0f0f0f" stroke-width="0.3" paint-order="stroke">AMERICA</text>
<text x="439.9" y="144.4" textLength="35.1" lengthAdjust="spacing" font-family="Liberation Sans, sans-serif" font-size="6.5" font-weight="700" fill="#858585" stroke="#0f0f0f" stroke-width="0.3" paint-order="stroke">OCEANIA</text>
<text x="603.0" y="143.2" textLength="26.0" lengthAdjust="spacing" font-family="Liberation Sans, sans-serif" font-size="6.5" font-weight="700" fill="#858585" stroke="#0f0f0f" stroke-width="0.3" paint-order="stroke">SOUTH</text>
<text x="598.4" y="151.5" textLength="34.9" lengthAdjust="spacing" font-family="Liberation Sans, sans-serif" font-size="6.5" font-weight="700" fill="#858585" stroke="#0f0f0f" stroke-width="0.3" paint-order="stroke">AMERICA</text>
<text x="326.7" y="115.4" textLength="27.6" lengthAdjust="spacing" font-family="Liberation Sans, sans-serif" font-size="6.5" font-weight="700" fill="#858585" stroke="#0f0f0f" stroke-width="0.3" paint-order="stroke">AFRICA</text>
<circle cx="320.0" cy="58.1" r="20.8" fill="rgb(50,172,45)" fill-opacity="0.49" stroke="rgb(50,172,45)" stroke-opacity="0.97" stroke-width="1.7"/>
<circle cx="453.9" cy="148.9" r="17.1" fill="rgb(50,172,45)" fill-opacity="0.49" stroke="rgb(50,172,45)" stroke-opacity="0.97" stroke-width="1.7"/>
<circle cx="230.2" cy="84.0" r="2.25" fill="rgb(237,129,40)" fill-opacity="0.5" stroke="rgb(237,129,40)" stroke-opacity="0.95" stroke-width="1.3"/>
<circle cx="424.8" cy="121.7" r="1.9" fill="rgb(237,129,40)" fill-opacity="0.6" stroke="rgb(237,129,40)" stroke-opacity="0.95" stroke-width="1.4"/>
</svg>
<div class="abs" style="left:950px;top:80.3px;width:21px;height:41.4px;background:#fff;border-radius:3px;box-shadow:0 0 0 1.3px rgba(0,0,0,.45)"></div>
<div class="abs" style="left:950px;top:100px;width:21px;height:1px;background:#ccc"></div>
<svg style="left:950px;top:80.3px" width="21" height="41.4" viewBox="0 0 21 41.4"><path d="M7.1 11.4h6.9M10.55 7.9v6.9M7.3 31.5h6.6" stroke="#000" stroke-width="1.8" fill="none"/></svg>
<div class="abs" style="left:948.7px;top:266px;width:50.6px;height:45.8px;background:rgba(235,235,235,0.88);border-radius:3px;box-shadow:0 0 6px rgba(0,0,0,.3)"></div>
<div class="abs" style="left:954.9px;top:271.0px;width:11.7px;height:12.5px;background:#ee7d85"></div>
<div class="abs" style="left:954.9px;top:283.5px;width:11.7px;height:12.5px;background:#e9a86b"></div>
<div class="abs" style="left:954.9px;top:296.0px;width:11.7px;height:12.5px;background:#72bf6a"></div>
<div class="abs" style="left:1448.8px;top:307.6px;width:139.4px;height:11.2px;background:rgba(225,225,225,0.85)"></div>
<div class="t" id="t0" style="font-size:11.6px;color:#c7c7d5;font-weight:400;top:5.60px;letter-spacing:0.258px;left:24.00px;">EDR</div>
<div class="t" id="t1" style="font-size:11.6px;color:#c7c7d5;font-weight:400;top:7.00px;left:55.50px;">/</div>
<div class="t" id="t2" style="font-size:12.4px;color:#d4d4e2;font-weight:400;top:4.80px;letter-spacing:-0.938px;left:62.40px;">EDR - NETWORK CONNECTIONS</div>
<div class="t" id="t3" style="font-size:10px;color:#c7c7d5;font-weight:400;top:5.60px;letter-spacing:-0.092px;left:1403.40px;-webkit-text-stroke:0.3px #c7c7d5;">Last 12 hours</div>
<div class="t" id="t4" style="font-size:9.8px;color:#d0d0de;font-weight:400;top:45.70px;letter-spacing:-0.543px;left:67.23px;width:800px;text-align:center;-webkit-text-stroke:0.45px #d0d0de;">NETWORK CONNS - HISTOGRAM</div>
<div class="t" id="t5" style="font-size:8.3px;color:#c8c8d6;font-weight:400;top:292.60px;right:1572.30px;">0</div>
<div class="t" id="t6" style="font-size:8.3px;color:#c8c8d6;font-weight:400;top:247.64px;right:1572.30px;">20</div>
<div class="t" id="t7" style="font-size:8.3px;color:#c8c8d6;font-weight:400;top:202.68px;right:1572.30px;">40</div>
<div class="t" id="t8" style="font-size:8.3px;color:#c8c8d6;font-weight:400;top:157.72px;right:1572.30px;">60</div>
<div class="t" id="t9" style="font-size:8.3px;color:#c8c8d6;font-weight:400;top:112.76px;right:1572.30px;">80</div>
<div class="t" id="t10" style="font-size:8.3px;color:#c8c8d6;font-weight:400;top:67.80px;right:1572.30px;">100</div>
<div class="t" id="t11" style="font-size:8.3px;color:#c8c8d6;font-weight:400;top:302.20px;letter-spacing:0.234px;left:-322.78px;width:800px;text-align:center;">19:00</div>
<div class="t" id="t12" style="font-size:8.3px;color:#c8c8d6;font-weight:400;top:302.20px;letter-spacing:0.234px;left:-259.20px;width:800px;text-align:center;">20:00</div>
<div class="t" id="t13" style="font-size:8.3px;color:#c8c8d6;font-weight:400;top:302.20px;letter-spacing:0.234px;left:-195.62px;width:800px;text-align:center;">21:00</div>
<div class="t" id="t14" style="font-size:8.3px;color:#c8c8d6;font-weight:400;top:302.20px;letter-spacing:0.234px;left:-132.04px;width:800px;text-align:center;">22:00</div>
<div class="t" id="t15" style="font-size:8.3px;color:#c8c8d6;font-weight:400;top:302.20px;letter-spacing:0.234px;left:-68.46px;width:800px;text-align:center;">23:00</div>
<div class="t" id="t16" style="font-size:8.3px;color:#c8c8d6;font-weight:400;top:302.20px;letter-spacing:0.234px;left:-4.88px;width:800px;text-align:center;">00:00</div>
<div class="t" id="t17" style="font-size:8.3px;color:#c8c8d6;font-weight:400;top:302.20px;letter-spacing:0.234px;left:58.70px;width:800px;text-align:center;">01:00</div>
<div class="t" id="t18" style="font-size:8.3px;color:#c8c8d6;font-weight:400;top:302.20px;letter-spacing:0.234px;left:122.28px;width:800px;text-align:center;">02:00</div>
<div class="t" id="t19" style="font-size:8.3px;color:#c8c8d6;font-weight:400;top:302.20px;letter-spacing:0.234px;left:185.86px;width:800px;text-align:center;">03:00</div>
<div class="t" id="t20" style="font-size:8.3px;color:#c8c8d6;font-weight:400;top:302.20px;letter-spacing:0.234px;left:249.44px;width:800px;text-align:center;">04:00</div>
<div class="t" id="t21" style="font-size:8.3px;color:#c8c8d6;font-weight:400;top:302.20px;letter-spacing:0.234px;left:313.02px;width:800px;text-align:center;">05:00</div>
<div class="t" id="t22" style="font-size:8.3px;color:#c8c8d6;font-weight:400;top:302.20px;letter-spacing:0.234px;left:376.60px;width:800px;text-align:center;">06:00</div>
<div class="t" id="t23" style="font-size:8.5px;color:#c0c0ce;font-weight:400;top:75.40px;letter-spacing:0.286px;left:827.30px;">ubunutu2004vm</div>
<div class="t" id="t24" style="font-size:8.5px;color:#c0c0ce;font-weight:400;top:92.95px;letter-spacing:0.539px;left:827.30px;">WIN-BO3C0QB0OV0</div>
<div class="t" id="t25" style="font-size:8.5px;color:#c0c0ce;font-weight:400;top:110.50px;letter-spacing:0.606px;left:827.30px;">WIN-7FK8M79Q5R6</div>
<div class="t" id="t26" style="font-size:8.5px;color:#c0c0ce;font-weight:400;top:128.05px;letter-spacing:0.408px;left:827.30px;">DESKTOP-HNQNQ92</div>
<div class="t" id="t27" style="font-size:9.8px;color:#d0d0de;font-weight:400;top:332.80px;letter-spacing:-0.612px;left:67.49px;width:800px;text-align:center;-webkit-text-stroke:0.45px #d0d0de;">TOP 10 PROCESSES - NETWORK CONNS</div>
<div class="t" id="t28" style="font-size:8.9px;color:#ccccdc;font-weight:400;top:352.40px;letter-spacing:0.076px;right:1250.42px;">/usr/lib/systemd/systemd-resolved</div>
<div class="t" id="t29" style="font-size:8.9px;color:#f2495c;font-weight:400;top:352.40px;letter-spacing:0.417px;right:681.98px;">6248</div>
<div class="t" id="t30" style="font-size:8.9px;color:#ccccdc;font-weight:400;top:367.40px;letter-spacing:-0.339px;right:1250.84px;">System</div>
<div class="t" id="t31" style="font-size:8.9px;color:#73bf69;font-weight:400;top:367.40px;letter-spacing:0.625px;right:681.77px;">42</div>
<div class="t" id="t32" style="font-size:8.9px;color:#ccccdc;font-weight:400;top:382.40px;letter-spacing:0.042px;right:1250.46px;">C:\\Windows\\System32\\svchost.exe</div>
<div class="t" id="t33" style="font-size:8.9px;color:#73bf69;font-weight:400;top:382.40px;letter-spacing:0.625px;right:681.77px;">34</div>
<div class="t" id="t34" style="font-size:8.9px;color:#ccccdc;font-weight:400;top:397.40px;letter-spacing:0.086px;right:1250.41px;">/usr/lib/systemd/systemd-timesyncd</div>
<div class="t" id="t35" style="font-size:8.9px;color:#73bf69;font-weight:400;top:397.40px;letter-spacing:0.625px;right:681.77px;">21</div>
<div class="t" id="t36" style="font-size:8.9px;color:#ccccdc;font-weight:400;top:412.40px;letter-spacing:0.170px;right:1250.33px;">/usr/lib/apt/methods/http</div>
<div class="t" id="t37" style="font-size:8.9px;color:#73bf69;font-weight:400;top:412.40px;letter-spacing:0.625px;right:681.77px;">17</div>
<div class="t" id="t38" style="font-size:8.9px;color:#ccccdc;font-weight:400;top:427.40px;letter-spacing:0.196px;right:1252.30px;">C:\\ProgramData\\Microsoft\\Windows Defender\\Platform\\4.18.2111.5-0\\MsMp...</div>
<div class="t" id="t39" style="font-size:8.9px;color:#73bf69;font-weight:400;top:427.40px;letter-spacing:0.625px;right:681.77px;">16</div>
<div class="t" id="t40" style="font-size:8.9px;color:#ccccdc;font-weight:400;top:442.40px;letter-spacing:0.104px;right:1250.40px;">C:\\Windows\\SysWOW64\\WindowsPowerShell\\v1.0\\powershell.exe</div>
<div class="t" id="t41" style="font-size:8.9px;color:#73bf69;font-weight:400;top:442.40px;right:682.40px;">8</div>
<div class="t" id="t42" style="font-size:8.9px;color:#ccccdc;font-weight:400;top:457.40px;letter-spacing:0.147px;right:1250.35px;">/usr/bin/fwupdmgr</div>
<div class="t" id="t43" style="font-size:8.9px;color:#73bf69;font-weight:400;top:457.40px;right:682.40px;">6</div>
<div class="t" id="t44" style="font-size:8.9px;color:#ccccdc;font-weight:400;top:472.40px;letter-spacing:0.046px;right:1250.45px;">/snap/snapd/14295/usr/lib/snapd/snapd</div>
<div class="t" id="t45" style="font-size:8.9px;color:#73bf69;font-weight:400;top:472.40px;right:682.40px;">4</div>
<div class="t" id="t46" style="font-size:8.9px;color:#ccccdc;font-weight:400;top:487.40px;letter-spacing:0.181px;right:1250.32px;">/usr/bin/wget</div>
<div class="t" id="t47" style="font-size:8.9px;color:#73bf69;font-weight:400;top:487.40px;right:682.40px;">2</div>
<div class="t" id="t48" style="font-size:9.8px;color:#d0d0de;font-weight:400;top:514.60px;letter-spacing:-0.667px;left:67.47px;width:800px;text-align:center;-webkit-text-stroke:0.45px #d0d0de;">LEAST SEEN PROCESSES - NETWORK CONNS</div>
<div class="t" id="t49" style="font-size:8.9px;color:#ccccdc;font-weight:400;top:534.40px;letter-spacing:0.181px;right:1250.32px;">/usr/bin/wget</div>
<div class="t" id="t50" style="font-size:8.9px;color:#73bf69;font-weight:400;top:534.40px;right:682.40px;">2</div>
<div class="t" id="t51" style="font-size:8.9px;color:#ccccdc;font-weight:400;top:549.40px;letter-spacing:0.046px;right:1250.45px;">/snap/snapd/14295/usr/lib/snapd/snapd</div>
<div class="t" id="t52" style="font-size:8.9px;color:#73bf69;font-weight:400;top:549.40px;right:682.40px;">4</div>
<div class="t" id="t53" style="font-size:8.9px;color:#ccccdc;font-weight:400;top:564.40px;letter-spacing:0.147px;right:1250.35px;">/usr/bin/fwupdmgr</div>
<div class="t" id="t54" style="font-size:8.9px;color:#73bf69;font-weight:400;top:564.40px;right:682.40px;">6</div>
<div class="t" id="t55" style="font-size:8.9px;color:#ccccdc;font-weight:400;top:579.40px;letter-spacing:0.104px;right:1250.40px;">C:\\Windows\\SysWOW64\\WindowsPowerShell\\v1.0\\powershell.exe</div>
<div class="t" id="t56" style="font-size:8.9px;color:#73bf69;font-weight:400;top:579.40px;right:682.40px;">8</div>
<div class="t" id="t57" style="font-size:8.9px;color:#ccccdc;font-weight:400;top:594.40px;letter-spacing:0.196px;right:1252.30px;">C:\\ProgramData\\Microsoft\\Windows Defender\\Platform\\4.18.2111.5-0\\MsMp...</div>
<div class="t" id="t58" style="font-size:8.9px;color:#73bf69;font-weight:400;top:594.40px;letter-spacing:0.625px;right:681.77px;">16</div>
<div class="t" id="t59" style="font-size:8.9px;color:#ccccdc;font-weight:400;top:609.40px;letter-spacing:0.170px;right:1250.33px;">/usr/lib/apt/methods/http</div>
<div class="t" id="t60" style="font-size:8.9px;color:#73bf69;font-weight:400;top:609.40px;letter-spacing:0.625px;right:681.77px;">17</div>
<div class="t" id="t61" style="font-size:8.9px;color:#ccccdc;font-weight:400;top:624.40px;letter-spacing:0.086px;right:1250.41px;">/usr/lib/systemd/systemd-timesyncd</div>
<div class="t" id="t62" style="font-size:8.9px;color:#73bf69;font-weight:400;top:624.40px;letter-spacing:0.625px;right:681.77px;">21</div>
<div class="t" id="t63" style="font-size:8.9px;color:#ccccdc;font-weight:400;top:639.40px;letter-spacing:0.042px;right:1250.46px;">C:\\Windows\\System32\\svchost.exe</div>
<div class="t" id="t64" style="font-size:8.9px;color:#73bf69;font-weight:400;top:639.40px;letter-spacing:0.625px;right:681.77px;">34</div>
<div class="t" id="t65" style="font-size:8.9px;color:#ccccdc;font-weight:400;top:654.40px;letter-spacing:-0.339px;right:1250.84px;">System</div>
<div class="t" id="t66" style="font-size:8.9px;color:#73bf69;font-weight:400;top:654.40px;letter-spacing:0.625px;right:681.77px;">42</div>
<div class="t" id="t67" style="font-size:8.9px;color:#ccccdc;font-weight:400;top:669.40px;letter-spacing:0.076px;right:1250.42px;">/usr/lib/systemd/systemd-resolved</div>
<div class="t" id="t68" style="font-size:8.9px;color:#f2495c;font-weight:400;top:669.40px;letter-spacing:0.417px;right:681.98px;">6248</div>
<div class="t" id="t69" style="font-size:9.8px;color:#d0d0de;font-weight:400;top:332.80px;letter-spacing:-0.694px;left:864.65px;width:800px;text-align:center;-webkit-text-stroke:0.45px #d0d0de;">PROCESSES - NETWORK CONNS</div>
<div class="t" id="t70" style="font-size:9.8px;color:#d0d0de;font-weight:400;top:45.70px;letter-spacing:-0.709px;left:864.65px;width:800px;text-align:center;-webkit-text-stroke:0.45px #d0d0de;">DST GEOIP</div>
<div class="t" id="t71" style="font-size:10.4px;color:#5a8fe8;font-weight:400;top:355.80px;letter-spacing:-0.289px;left:941.20px;">process_image</div>
<div class="t" id="t72" style="font-size:10.4px;color:#5a8fe8;font-weight:400;top:355.80px;letter-spacing:-0.384px;right:13.98px;">Count</div>
<div class="t" id="t73" style="font-size:10.4px;color:#ccccdc;font-weight:400;top:378.80px;letter-spacing:0.060px;left:941.20px;">/usr/lib/systemd/systemd-resolved</div>
<div class="t" id="t74" style="font-size:10.4px;color:#ccccdc;font-weight:400;top:378.80px;letter-spacing:0.392px;right:18.61px;">6248</div>
<div class="t" id="t75" style="font-size:10.4px;color:#ccccdc;font-weight:400;top:402.83px;letter-spacing:-0.271px;left:941.20px;">System</div>
<div class="t" id="t76" style="font-size:10.4px;color:#ccccdc;font-weight:400;top:402.83px;letter-spacing:0.238px;right:18.76px;">42</div>
<div class="t" id="t77" style="font-size:10.4px;color:#ccccdc;font-weight:400;top:426.86px;letter-spacing:0.023px;left:941.20px;">C:\\Windows\\System32\\svchost.exe</div>
<div class="t" id="t78" style="font-size:10.4px;color:#ccccdc;font-weight:400;top:426.86px;letter-spacing:0.238px;right:18.76px;">34</div>
<div class="t" id="t79" style="font-size:10.4px;color:#ccccdc;font-weight:400;top:450.89px;letter-spacing:0.046px;left:941.20px;">/usr/lib/systemd/systemd-timesyncd</div>
<div class="t" id="t80" style="font-size:10.4px;color:#ccccdc;font-weight:400;top:450.89px;letter-spacing:0.238px;right:18.76px;">21</div>
<div class="t" id="t81" style="font-size:10.4px;color:#ccccdc;font-weight:400;top:474.92px;letter-spacing:0.154px;left:941.20px;">/usr/lib/apt/methods/http</div>
<div class="t" id="t82" style="font-size:10.4px;color:#ccccdc;font-weight:400;top:474.92px;letter-spacing:0.238px;right:18.76px;">17</div>
<div class="t" id="t83" style="font-size:10.4px;color:#ccccdc;font-weight:400;top:498.95px;letter-spacing:0.117px;left:941.20px;">C:\\ProgramData\\Microsoft\\Windows Defender\\Platform\\4.18.2...</div>
<div class="t" id="t84" style="font-size:10.4px;color:#ccccdc;font-weight:400;top:498.95px;letter-spacing:0.238px;right:18.76px;">16</div>
<div class="t" id="t85" style="font-size:10.4px;color:#ccccdc;font-weight:400;top:522.98px;letter-spacing:0.099px;left:941.20px;">C:\\Windows\\SysWOW64\\WindowsPowerShell\\v1.0\\powershell...</div>
<div class="t" id="t86" style="font-size:10.4px;color:#ccccdc;font-weight:400;top:522.98px;right:19.00px;">8</div>
<div class="t" id="t87" style="font-size:10.4px;color:#ccccdc;font-weight:400;top:547.01px;letter-spacing:0.138px;left:941.20px;">/usr/bin/fwupdmgr</div>
<div class="t" id="t88" style="font-size:10.4px;color:#ccccdc;font-weight:400;top:547.01px;right:19.00px;">6</div>
<div class="t" id="t89" style="font-size:10.4px;color:#ccccdc;font-weight:400;top:571.04px;letter-spacing:0.016px;left:941.20px;">/snap/snapd/14295/usr/lib/snapd/snapd</div>
<div class="t" id="t90" style="font-size:10.4px;color:#ccccdc;font-weight:400;top:571.04px;right:19.00px;">4</div>
<div class="t" id="t91" style="font-size:10.4px;color:#ccccdc;font-weight:400;top:595.07px;letter-spacing:0.148px;left:941.20px;">/usr/bin/wget</div>
<div class="t" id="t92" style="font-size:10.4px;color:#ccccdc;font-weight:400;top:595.07px;right:19.00px;">2</div>
<div class="t" id="t93" style="font-size:9.1px;color:#555;font-weight:400;top:267.30px;left:972.30px;">&lt; 0</div>
<div class="t" id="t94" style="font-size:9.1px;color:#555;font-weight:400;top:279.80px;left:972.30px;">0–10</div>
<div class="t" id="t95" style="font-size:9.1px;color:#555;font-weight:400;top:292.30px;left:972.30px;">10+</div>
<div class="t" id="t96" style="font-size:7.6px;color:#0078a8;font-weight:400;top:303.20px;letter-spacing:0.115px;left:1452.30px;">Leaflet</div>
<div class="t" id="t97" style="font-size:7.6px;color:#333;font-weight:400;top:303.20px;left:1477.80px;">| ©</div>
<div class="t" id="t98" style="font-size:7.6px;color:#0078a8;font-weight:400;top:303.20px;letter-spacing:0.074px;left:1490.30px;">OpenStreetMap</div>
<div class="t" id="t99" style="font-size:7.6px;color:#333;font-weight:400;top:303.20px;left:1547.00px;">©</div>
<div class="t" id="t100" style="font-size:7.6px;color:#0078a8;font-weight:400;top:303.20px;letter-spacing:0.062px;left:1555.00px;">CartoDB</div>
</body></html>
